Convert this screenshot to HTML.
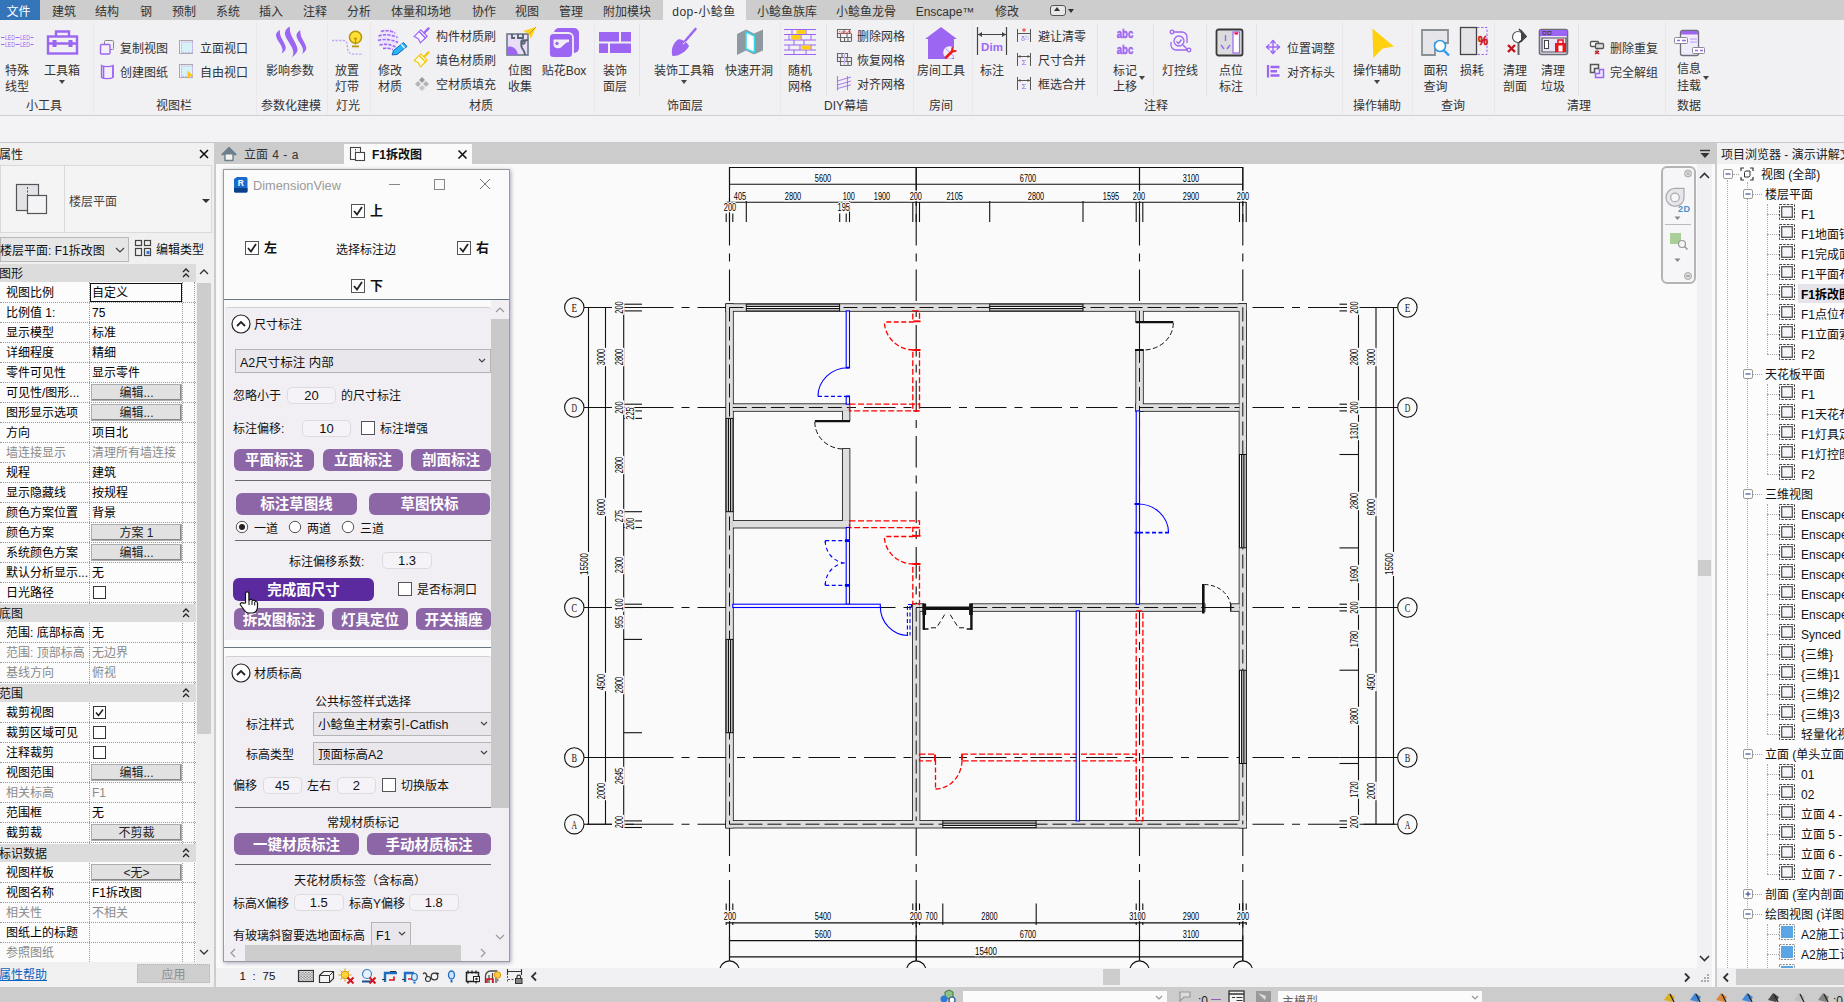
<!DOCTYPE html><html lang="zh-CN"><head><meta charset="utf-8"><title>Revit - DimensionView</title><style>
html,body{margin:0;padding:0}
body{width:1844px;height:1002px;overflow:hidden;background:#cccccc;position:relative;font-family:"Liberation Sans","Noto Sans CJK SC",sans-serif;font-size:12px;color:#333}
.a{position:absolute;display:block}
.t{position:absolute;white-space:nowrap}

</style></head><body>
<!-- ribbon -->
<div class="a" style="left:0px;top:0px;width:1844px;height:20px;background:#cdcdcd"></div>
<div class="a" style="left:0px;top:0px;width:40px;height:20px;background:#3474b9"></div>
<div class="a" style="left:663px;top:0px;width:83px;height:21px;background:#f1f0f3"></div>
<div class="t" style="top:3.7px;line-height:16px;font-size:12px;left:18.5px;transform:translateX(-50%);color:#fff;">文件</div>
<div class="t" style="top:3.7px;line-height:16px;font-size:12px;left:64px;transform:translateX(-50%);color:#333;">建筑</div>
<div class="t" style="top:3.7px;line-height:16px;font-size:12px;left:107px;transform:translateX(-50%);color:#333;">结构</div>
<div class="t" style="top:3.7px;line-height:16px;font-size:12px;left:146px;transform:translateX(-50%);color:#333;">钢</div>
<div class="t" style="top:3.7px;line-height:16px;font-size:12px;left:184px;transform:translateX(-50%);color:#333;">预制</div>
<div class="t" style="top:3.7px;line-height:16px;font-size:12px;left:228px;transform:translateX(-50%);color:#333;">系统</div>
<div class="t" style="top:3.7px;line-height:16px;font-size:12px;left:271px;transform:translateX(-50%);color:#333;">插入</div>
<div class="t" style="top:3.7px;line-height:16px;font-size:12px;left:315px;transform:translateX(-50%);color:#333;">注释</div>
<div class="t" style="top:3.7px;line-height:16px;font-size:12px;left:359px;transform:translateX(-50%);color:#333;">分析</div>
<div class="t" style="top:3.7px;line-height:16px;font-size:12px;left:421px;transform:translateX(-50%);color:#333;">体量和场地</div>
<div class="t" style="top:3.7px;line-height:16px;font-size:12px;left:484px;transform:translateX(-50%);color:#333;">协作</div>
<div class="t" style="top:3.7px;line-height:16px;font-size:12px;left:527px;transform:translateX(-50%);color:#333;">视图</div>
<div class="t" style="top:3.7px;line-height:16px;font-size:12px;left:571px;transform:translateX(-50%);color:#333;">管理</div>
<div class="t" style="top:3.7px;line-height:16px;font-size:12px;left:627px;transform:translateX(-50%);color:#333;">附加模块</div>
<div class="t" style="top:3.7px;line-height:16px;font-size:12px;left:704px;transform:translateX(-50%);color:#333;letter-spacing:.5px;">dop-小鲶鱼</div>
<div class="t" style="top:3.7px;line-height:16px;font-size:12px;left:787px;transform:translateX(-50%);color:#333;">小鲶鱼族库</div>
<div class="t" style="top:3.7px;line-height:16px;font-size:12px;left:866px;transform:translateX(-50%);color:#333;">小鲶鱼龙骨</div>
<div class="t" style="top:3.7px;line-height:16px;font-size:12px;left:945px;transform:translateX(-50%);color:#333;">Enscape™</div>
<div class="t" style="top:3.7px;line-height:16px;font-size:12px;left:1007px;transform:translateX(-50%);color:#333;">修改</div>
<div class="a" style="left:1050px;top:5px;width:14px;height:9px;border:1px solid #555;border-radius:3px;background:#e8e8e8"></div><div class="a" style="left:1054px;top:7px;border:3px solid transparent;border-bottom:4px solid #333;border-top:0"></div><div class="a" style="left:1068px;top:9px;border:3px solid transparent;border-top:4px solid #333;"></div>
<div class="a" style="left:0px;top:20px;width:1844px;height:96px;background:#f1f0f3;border-bottom:1px solid #cfcfcf;box-sizing:border-box"></div>
<div class="a" style="left:0px;top:116px;width:1844px;height:27px;background:#f3f2f4"></div>
<div class="a" style="left:93px;top:22px;width:1px;height:92px;background:#e9e7ec"></div>
<div class="a" style="left:256px;top:22px;width:1px;height:92px;background:#e9e7ec"></div>
<div class="a" style="left:327px;top:22px;width:1px;height:92px;background:#e9e7ec"></div>
<div class="a" style="left:370px;top:22px;width:1px;height:92px;background:#e9e7ec"></div>
<div class="a" style="left:594px;top:22px;width:1px;height:92px;background:#e9e7ec"></div>
<div class="a" style="left:780px;top:22px;width:1px;height:92px;background:#e9e7ec"></div>
<div class="a" style="left:913px;top:22px;width:1px;height:92px;background:#e9e7ec"></div>
<div class="a" style="left:972px;top:22px;width:1px;height:92px;background:#e9e7ec"></div>
<div class="a" style="left:1342px;top:22px;width:1px;height:92px;background:#e9e7ec"></div>
<div class="a" style="left:1412px;top:22px;width:1px;height:92px;background:#e9e7ec"></div>
<div class="a" style="left:1494px;top:22px;width:1px;height:92px;background:#e9e7ec"></div>
<div class="a" style="left:1665px;top:22px;width:1px;height:92px;background:#e9e7ec"></div>
<div class="a" style="left:639px;top:24px;width:1px;height:72px;background:#e4e2e8"></div>
<div class="a" style="left:826px;top:24px;width:1px;height:72px;background:#e4e2e8"></div>
<div class="a" style="left:1097px;top:24px;width:1px;height:72px;background:#e4e2e8"></div>
<div class="a" style="left:1153px;top:24px;width:1px;height:72px;background:#e4e2e8"></div>
<div class="a" style="left:1206px;top:24px;width:1px;height:72px;background:#e4e2e8"></div>
<div class="a" style="left:1256px;top:24px;width:1px;height:72px;background:#e4e2e8"></div>
<div class="a" style="left:1578px;top:24px;width:1px;height:72px;background:#e4e2e8"></div>
<div class="t" style="top:97.8px;line-height:16px;font-size:12px;left:44px;transform:translateX(-50%);">小工具</div>
<div class="t" style="top:97.8px;line-height:16px;font-size:12px;left:174px;transform:translateX(-50%);">视图栏</div>
<div class="t" style="top:97.8px;line-height:16px;font-size:12px;left:291px;transform:translateX(-50%);">参数化建模</div>
<div class="t" style="top:97.8px;line-height:16px;font-size:12px;left:348px;transform:translateX(-50%);">灯光</div>
<div class="t" style="top:97.8px;line-height:16px;font-size:12px;left:481px;transform:translateX(-50%);">材质</div>
<div class="t" style="top:97.8px;line-height:16px;font-size:12px;left:685px;transform:translateX(-50%);">饰面层</div>
<div class="t" style="top:97.8px;line-height:16px;font-size:12px;left:846px;transform:translateX(-50%);">DIY幕墙</div>
<div class="t" style="top:97.8px;line-height:16px;font-size:12px;left:941px;transform:translateX(-50%);">房间</div>
<div class="t" style="top:97.8px;line-height:16px;font-size:12px;left:1156px;transform:translateX(-50%);">注释</div>
<div class="t" style="top:97.8px;line-height:16px;font-size:12px;left:1377px;transform:translateX(-50%);">操作辅助</div>
<div class="t" style="top:97.8px;line-height:16px;font-size:12px;left:1453px;transform:translateX(-50%);">查询</div>
<div class="t" style="top:97.8px;line-height:16px;font-size:12px;left:1579px;transform:translateX(-50%);">清理</div>
<div class="t" style="top:97.8px;line-height:16px;font-size:12px;left:1689px;transform:translateX(-50%);">数据</div>
<svg class="a" style="left:1.0px;top:26px;overflow:visible" width="32" height="32" viewBox="0 0 32 32"><g stroke="#9c66f3" stroke-width="1" fill="none"><path d="M0 11.500h3.500M14.500 11.500h4M29.500 11.500h3M0 18.500h3.500M14.500 18.500h4M29.500 18.500h3"/></g><g font-family="Liberation Sans,sans-serif" font-size="7" fill="#9c66f3"><text x="4" y="14" textLength="10" lengthAdjust="spacingAndGlyphs">LED</text><text x="19" y="14" textLength="10" lengthAdjust="spacingAndGlyphs">LED</text><text x="4" y="21" textLength="10" lengthAdjust="spacingAndGlyphs">LED</text><text x="19" y="21" textLength="10" lengthAdjust="spacingAndGlyphs">LED</text></g></svg><div class="t" style="top:62.8px;line-height:16px;font-size:12px;left:17px;transform:translateX(-50%);">特殊</div><div class="t" style="top:79.4px;line-height:16px;font-size:12px;left:17px;transform:translateX(-50%);">线型</div>
<svg class="a" style="left:46.0px;top:26px;overflow:visible" width="32" height="32" viewBox="0 0 32 32"><g fill="none" stroke="#9c66f3" stroke-width="2.4"><rect x="2" y="10.5" width="29" height="17"/><path d="M10 10V5.5h13V10M2 17.5h29"/></g><rect x="6.5" y="14" width="4" height="7" fill="#9c66f3"/><rect x="22.5" y="14" width="4" height="7" fill="#9c66f3"/></svg><div class="t" style="top:62.8px;line-height:16px;font-size:12px;left:62px;transform:translateX(-50%);">工具箱</div><div class="a" style="left:59px;top:80px;border:3px solid transparent;border-top:4px solid #444;"></div>
<svg class="a" style="left:99px;top:39px;overflow:visible" width="16" height="16" viewBox="0 0 16 16"><rect x="5.500" y="1.500" width="9" height="9" rx="1" fill="none" stroke="#888" stroke-width="1"/><rect x="1.500" y="5.500" width="9.500" height="9.500" rx="1" fill="#f4f0fb" stroke="#9c66f3" stroke-width="1.400"/></svg><div class="t" style="top:40.6px;line-height:16px;font-size:12px;left:120px;">复制视图</div>
<svg class="a" style="left:99px;top:63px;overflow:visible" width="16" height="16" viewBox="0 0 16 16"><path d="M2.500 2.500c2 1.500 9 1.500 11.500 0v12c-2.500 1.500-9.500 1.500-11.500 0z" fill="#f4f0fb" stroke="#9c66f3" stroke-width="1.300"/><path d="M4.500 3v12M14 2.500v12" stroke="#9c66f3" stroke-width="1.600"/></svg><div class="t" style="top:64.6px;line-height:16px;font-size:12px;left:120px;">创建图纸</div>
<svg class="a" style="left:178px;top:39px;overflow:visible" width="16" height="16" viewBox="0 0 16 16"><rect x="1.500" y="1.500" width="13" height="13" fill="none" stroke="#aaa" stroke-width="1"/><rect x="3.500" y="3" width="11" height="10.500" fill="#d6f1f7" stroke="#c9b3f7" stroke-width="1" stroke-dasharray="2 1"/></svg><div class="t" style="top:40.6px;line-height:16px;font-size:12px;left:200px;">立面视口</div>
<svg class="a" style="left:178px;top:63px;overflow:visible" width="16" height="16" viewBox="0 0 16 16"><rect x="1.500" y="1.500" width="13" height="13" fill="none" stroke="#aaa" stroke-width="1"/><rect x="3.500" y="3" width="11" height="10.500" fill="#d6f1f7" stroke="#c9b3f7" stroke-width="1" stroke-dasharray="2 1"/><path d="M9.500 7.500l6 5.500l-3.500 .3l-2.500 3z" fill="#ffc61a"/></svg><div class="t" style="top:64.6px;line-height:16px;font-size:12px;left:200px;">自由视口</div>
<svg class="a" style="left:274.0px;top:26px;overflow:visible" width="32" height="32" viewBox="0 0 32 32"><g fill="#9c66f3"><path d="M5.8 4.0C3.3 5.5 1.3 7.5 2.3 11.0C3.8 15.5 8.3 19.5 8.5 24.0C8.6 25.5 8.1 27.0 7.2 28.0C9.8 26.0 12.1 24.0 11.8 21.5C11.1 17.0 6.6 12.0 6.1 8.0C5.9 6.5 5.8 5.0 5.8 4.0z"/><path d="M15.8 0.4C12.6 2.3 10.0 4.9 11.3 9.4C13.2 15.2 19.0 20.4 19.3 26.2C19.4 28.1 18.8 30.1 17.6 31.4C21.0 28.8 23.9 26.2 23.5 23.0C22.6 17.2 16.8 10.7 16.2 5.6C15.9 3.6 15.8 1.7 15.8 0.4z"/><path d="M26.3 4.2C23.8 5.7 21.8 7.7 22.8 11.2C24.3 15.7 28.8 19.7 29.0 24.2C29.1 25.7 28.6 27.2 27.7 28.2C30.3 26.2 32.6 24.2 32.3 21.7C31.6 17.2 27.1 12.2 26.6 8.2C26.4 6.7 26.3 5.2 26.3 4.2z"/></g></svg><div class="t" style="top:62.8px;line-height:16px;font-size:12px;left:290px;transform:translateX(-50%);">影响参数</div>
<svg class="a" style="left:331.0px;top:26px;overflow:visible" width="32" height="32" viewBox="0 0 32 32"><path d="M1 14.500H12C16 14.500 16.500 18 16.500 22C16.500 27 20 28.200 25 28.200H32" fill="none" stroke="#bda6f3" stroke-width="1.300" stroke-dasharray="2.200 1.400"/><circle cx="24.500" cy="11.300" r="6" fill="#ffe033" stroke="#b8960c" stroke-width="1.500"/><path d="M22.800 12.500h3.400M24.500 12.500v6" fill="none" stroke="#b8960c" stroke-width="1.300"/><path d="M21 20.400h7" stroke="#b8960c" stroke-width="1.800"/></svg><div class="t" style="top:62.8px;line-height:16px;font-size:12px;left:347px;transform:translateX(-50%);">放置</div><div class="t" style="top:79.4px;line-height:16px;font-size:12px;left:347px;transform:translateX(-50%);">灯带</div>
<svg class="a" style="left:374.0px;top:26px;overflow:visible" width="32" height="32" viewBox="0 0 32 32"><circle cx="14.200" cy="12.900" r="10.400" fill="#ece4fc"/><g stroke="#9c66f3" stroke-width="1.500" stroke-dasharray="3.200 1.300" fill="none"><path d="M7 5.500c5-1.500 10-1 14 1.500M4.500 10c6-2 13-1.500 19 1.500M4 14.500c7-2 14-1 20 2M5.500 19c6-1.500 11-.500 16 2M9 22.500c4-.500 7 0 10 1"/></g><path d="M18.100 28.900L19.500 24.500L29.500 16.500L33 20.500L23 28.500z" fill="#29b6f6" stroke="#1565c0" stroke-width="1"/><path d="M27.300 18.300l3.500 4" stroke="#fff" stroke-width="1.200"/></svg><div class="t" style="top:62.8px;line-height:16px;font-size:12px;left:390px;transform:translateX(-50%);">修改</div><div class="t" style="top:79.4px;line-height:16px;font-size:12px;left:390px;transform:translateX(-50%);">材质</div>
<svg class="a" style="left:414px;top:27px;overflow:visible" width="16" height="16" viewBox="0 0 16 16"><g transform="translate(7.500,8.500) rotate(45)" fill="#f7f2ff" stroke="#9c66f3" stroke-width="1.200" stroke-linejoin="round"><path d="M0 -10v6.500" stroke-width="2.400" stroke-linecap="round"/><rect x="-4.500" y="-3.500" width="9" height="2.500"/><path d="M-4.500 -1v7l4.500-1.500l4.500 1.500v-7z"/></g></svg><div class="t" style="top:28.6px;line-height:16px;font-size:12px;left:436px;">构件材质刷</div>
<svg class="a" style="left:414px;top:51px;overflow:visible" width="16" height="16" viewBox="0 0 16 16"><g transform="translate(7.500,8.500) rotate(45)" fill="#fffbe0" stroke="#f5c710" stroke-width="1.200" stroke-linejoin="round"><path d="M0 -10v6.500" stroke-width="2.400" stroke-linecap="round"/><rect x="-4.500" y="-3.500" width="9" height="2.500"/><path d="M-4.500 -1v7l4.500-1.500l4.500 1.500v-7z"/></g></svg><div class="t" style="top:52.6px;line-height:16px;font-size:12px;left:436px;">填色材质刷</div>
<svg class="a" style="left:414px;top:75px;overflow:visible" width="16" height="16" viewBox="0 0 16 16"><g fill="#9a9a9a"><path d="M8 2l3 3l-3 3l-3-3z"/><path d="M4 6l3 3l-3 3l-3-3z" opacity=".7"/><path d="M12 6l3 3l-3 3l-3-3z" opacity=".7"/><path d="M8 10l3 3l-3 3l-3-3z" opacity=".5"/></g></svg><div class="t" style="top:76.6px;line-height:16px;font-size:12px;left:436px;">空材质填充</div>
<svg class="a" style="left:504.0px;top:26px;overflow:visible" width="32" height="32" viewBox="0 0 32 32"><rect x="3" y="8" width="21" height="21" fill="#e8defa" stroke="#6c7a86" stroke-width="1.6"/><path d="M3 21c6-2 10 2 11 8H3z" fill="#9c66f3"/><path d="M8 8v4h3M14 8v4h5v-4M24 14c-6 0-8 4-6 8c2 3 3 4 3 7" fill="none" stroke="#56636e" stroke-width="1.8"/><circle cx="19" cy="16" r="2" fill="none" stroke="#56636e" stroke-width="1.4"/><path d="M19 5l13-4l-5 12l-2-5z" fill="#ffd21f"/><path d="M32 1l-7 7" stroke="#c79a00" stroke-width="1"/></svg><div class="t" style="top:62.8px;line-height:16px;font-size:12px;left:520px;transform:translateX(-50%);">位图</div><div class="t" style="top:79.4px;line-height:16px;font-size:12px;left:520px;transform:translateX(-50%);">收集</div>
<svg class="a" style="left:548.0px;top:26px;overflow:visible" width="32" height="32" viewBox="0 0 32 32"><rect x="6" y="2" width="25" height="25" rx="5" fill="#9c66f3"/><rect x="1" y="7" width="24" height="25" rx="4.500" fill="#9c66f3" stroke="#f1eff4" stroke-width="1.800"/><path d="M5.500 13.500h15.500v2.500c-3 0-5 3-8 5.500c-2 1.500-7.500 1-7.500-3z" fill="#f1eff4"/><circle cx="9" cy="17.500" r="1.700" fill="#9c66f3"/></svg><div class="t" style="top:62.8px;line-height:16px;font-size:12px;left:564px;transform:translateX(-50%);">贴花Box</div>
<svg class="a" style="left:599.0px;top:26px;overflow:visible" width="32" height="32" viewBox="0 0 32 32"><g fill="#9c66f3"><rect x="0" y="6" width="20" height="9.5"/><rect x="22" y="6" width="10" height="9.5"/><rect x="0" y="17.500" width="9" height="9.5"/><rect x="11" y="17.5" width="21" height="9.5"/></g></svg><div class="t" style="top:62.8px;line-height:16px;font-size:12px;left:615px;transform:translateX(-50%);">装饰</div><div class="t" style="top:79.4px;line-height:16px;font-size:12px;left:615px;transform:translateX(-50%);">面层</div>
<svg class="a" style="left:668.0px;top:26px;overflow:visible" width="32" height="32" viewBox="0 0 32 32"><path d="M27.500 3L15 17.500" stroke="#9c66f3" stroke-width="2.600" stroke-linecap="round"/><path d="M10 13.500C13 12.500 19 16 21 20C19 25 11 30.500 4.500 30C2.500 24 5 17 10 13.500z" fill="#9c66f3"/><path d="M17.500 15.500L15 18.500" stroke="#f1eff4" stroke-width="1"/></svg><div class="t" style="top:62.8px;line-height:16px;font-size:12px;left:684px;transform:translateX(-50%);">装饰工具箱</div><div class="a" style="left:681px;top:80px;border:3px solid transparent;border-top:4px solid #444;"></div>
<svg class="a" style="left:733.0px;top:26px;overflow:visible" width="32" height="32" viewBox="0 0 32 32"><path d="M4 8l9-4.500l8 4l9-4v21l-9 4l-8-4l-9 4.500z" fill="#8e9aa0"/><path d="M13 6l8.500 4v16.500l-8.500-3.500z" fill="#fff" stroke="#35d7ee" stroke-width="1.500"/></svg><div class="t" style="top:62.8px;line-height:16px;font-size:12px;left:749px;transform:translateX(-50%);">快速开洞</div>
<svg class="a" style="left:784.0px;top:26px;overflow:visible" width="32" height="32" viewBox="0 0 32 32"><g stroke="#9c66f3" stroke-width="1.100"><path d="M0 3.500h32M0 8.500h32M0 14h32M0 19h32M0 24h32M0 28.500h32"/><path d="M8 3.500v5M22 3.500v5M5 8.500v5.500M17 8.500v5.500M27 8.500v5.500M10 14v5M20 14v5M5 19v5M16 19v5M27 19v5M10 24v4.500M22 24v4.500" stroke-width="1"/></g><rect x="12.500" y="4" width="9" height="4" fill="#ffcf14"/><rect x="7" y="9" width="9.500" height="4.500" fill="#ffcf14"/><rect x="17.500" y="19.500" width="9" height="4" fill="#ffcf14"/></svg><div class="t" style="top:62.8px;line-height:16px;font-size:12px;left:800px;transform:translateX(-50%);">随机</div><div class="t" style="top:79.4px;line-height:16px;font-size:12px;left:800px;transform:translateX(-50%);">网格</div>
<svg class="a" style="left:836px;top:27px;overflow:visible" width="16" height="16" viewBox="0 0 16 16"><g fill="none" stroke="#666" stroke-width="1.100"><path d="M1 2.500h14M1 6.500h14M1 10.500h15M4 14.500h11M1.500 2.500v8M8 2.500v4M13.500 2.500v4M4.500 6.500v4M11 6.500v4M15.500 6.500v8M4.500 10.500v4M8.500 10.500v4M12 10.500v4"/></g><path d="M3.500 4l1.500 3l1.500-3l1.500 3l1.500-3l1.500 3l1.500-3l1.500 3l1-3" fill="none" stroke="#f0525c" stroke-width="1" stroke-dasharray="1.200 .8"/></svg><div class="t" style="top:28.6px;line-height:16px;font-size:12px;left:857px;">删除网格</div>
<svg class="a" style="left:836px;top:51px;overflow:visible" width="16" height="16" viewBox="0 0 16 16"><g fill="none" stroke="#666" stroke-width="1.100"><path d="M1 2.500h11M1 6.500h15M1 10.500h15M4 14.500h11M1.500 2.500v8M6 2.500v4M11.500 2.500v4M4.500 6.500v4M11 6.500v4M15.500 6.500v8M4.500 10.500v4M8.500 10.500v4M12 10.500v4"/></g><path d="M8.500 2v12" stroke="#c9b3f7" stroke-width="1.300"/></svg><div class="t" style="top:52.6px;line-height:16px;font-size:12px;left:857px;">恢复网格</div>
<svg class="a" style="left:836px;top:75px;overflow:visible" width="16" height="16" viewBox="0 0 16 16"><path d="M1.500 1v14.500M11.500 1v14.500" stroke="#999" stroke-width="1.100"/><path d="M1.500 6l13.500-4M1.500 10l13.500-4M1.500 13.500l13.500-3.800" stroke="#9c66f3" stroke-width="1.100" opacity=".8"/></svg><div class="t" style="top:76.6px;line-height:16px;font-size:12px;left:857px;">对齐网格</div>
<svg class="a" style="left:925.0px;top:26px;overflow:visible" width="32" height="32" viewBox="0 0 32 32"><path d="M16 1L0 13h3v20h26V13H32z" fill="#9c66f3"/><circle cx="24.500" cy="26.500" r="6.300" fill="#f4f0fb"/><path d="M20.500 22.500l8.500 8" stroke="#c9b3f7" stroke-width="1.300"/><path d="M21 31.500l6-6" stroke="#e8211b" stroke-width="2.800" stroke-linecap="round"/><path d="M27 25.500l.5-3.500M27 25.500l3.500-.5" stroke="#e8211b" stroke-width="2.200" stroke-linecap="round"/></svg><div class="t" style="top:62.8px;line-height:16px;font-size:12px;left:941px;transform:translateX(-50%);">房间工具</div>
<svg class="a" style="left:976.0px;top:26px;overflow:visible" width="32" height="32" viewBox="0 0 32 32"><path d="M1.500 1v28M30.500 1v28M2 8.500h28" stroke="#444" stroke-width="1.200" fill="none"/><path d="M2 8.500l4-2.500v5zM30 8.500l-4-2.500v5z" fill="#444"/><text x="16" y="25" text-anchor="middle" font-family="Liberation Sans,sans-serif" font-weight="bold" font-size="11.500" fill="#9c66f3" textLength="22">Dim</text></svg><div class="t" style="top:62.8px;line-height:16px;font-size:12px;left:992px;transform:translateX(-50%);">标注</div>
<svg class="a" style="left:1016px;top:27px;overflow:visible" width="16" height="16" viewBox="0 0 16 16"><path d="M1.500 2v13M14.500 2v13M2 6.500h12" stroke="#555" stroke-width="1" fill="none"/><circle cx="8" cy="3" r="1.700" fill="#f55"/><text x="5" y="14" font-size="7" font-family="Liberation Sans,sans-serif" fill="#9c66f3">δ</text><text x="9" y="13" font-size="7" font-family="Liberation Sans,sans-serif" fill="#c9b3f7">b</text></svg><div class="t" style="top:28.6px;line-height:16px;font-size:12px;left:1038px;">避让清零</div>
<svg class="a" style="left:1016px;top:51px;overflow:visible" width="16" height="16" viewBox="0 0 16 16"><path d="M1.500 2v13M14.500 2v13M2 5.500h12" stroke="#555" stroke-width="1" fill="none"/><path d="M2 5.500l2.500-1.500v3zM14 5.500l-2.500-1.500v3z" fill="#555"/><text x="5.500" y="14" font-size="8" font-family="Liberation Sans,sans-serif" fill="#9c66f3">Σ</text></svg><div class="t" style="top:52.6px;line-height:16px;font-size:12px;left:1038px;">尺寸合并</div>
<svg class="a" style="left:1016px;top:75px;overflow:visible" width="16" height="16" viewBox="0 0 16 16"><path d="M1.500 2v13M14.500 2v13M2 5.500h12" stroke="#555" stroke-width="1" fill="none"/><path d="M2 5.500l2.500-1.500v3zM14 5.500l-2.500-1.500v3z" fill="#555"/><text x="5.500" y="14" font-size="8" font-family="Liberation Sans,sans-serif" fill="#9c66f3">Σ</text></svg><div class="t" style="top:76.6px;line-height:16px;font-size:12px;left:1038px;">框选合并</div>
<svg class="a" style="left:1109.0px;top:26px;overflow:visible" width="32" height="32" viewBox="0 0 32 32"><g font-family="Liberation Sans,sans-serif" font-weight="bold" font-size="13.500" fill="#9c66f3" stroke="#9c66f3" stroke-width=".500" text-anchor="middle"><text x="16" y="12" textLength="16.500" lengthAdjust="spacingAndGlyphs">abc</text><text x="16" y="28" textLength="16.500" lengthAdjust="spacingAndGlyphs">abc</text></g></svg><div class="t" style="top:62.8px;line-height:16px;font-size:12px;left:1125px;transform:translateX(-50%);">标记</div><div class="t" style="top:79.4px;line-height:16px;font-size:12px;left:1125px;transform:translateX(-50%);">上移</div><div class="a" style="left:1139px;top:76px;border:3px solid transparent;border-top:4px solid #444;"></div>
<svg class="a" style="left:1164.0px;top:26px;overflow:visible" width="32" height="32" viewBox="0 0 32 32"><g fill="none" stroke="#9c66f3" stroke-width="1.300"><circle cx="8" cy="6" r="1.800"/><path d="M10 6h8a5 5 0 0 1 5 5v6M24 24h-12a5 5 0 0 1-5-5v-3"/><circle cx="25" cy="24" r="1.800"/><circle cx="15" cy="15" r="5"/><path d="M12.500 15.500l2 2l3-4M19 19l4 4"/></g></svg><div class="t" style="top:62.8px;line-height:16px;font-size:12px;left:1180px;transform:translateX(-50%);">灯控线</div>
<svg class="a" style="left:1215.0px;top:26px;overflow:visible" width="32" height="32" viewBox="0 0 32 32"><rect x="1.500" y="3.500" width="26" height="26" rx="2" fill="#dcdcde" stroke="#3a3a3a" stroke-width="1.800"/><rect x="18" y="6" width="6.500" height="21" fill="#fff" stroke="#9c66f3" stroke-width="1.200"/><rect x="19.500" y="6.500" width="3.500" height="2" fill="#f03"/><path d="M10.500 9v6M6 19l3 4M15 19l-3 4" stroke="#9c66f3" stroke-width="1.400"/></svg><div class="t" style="top:62.8px;line-height:16px;font-size:12px;left:1231px;transform:translateX(-50%);">点位</div><div class="t" style="top:79.4px;line-height:16px;font-size:12px;left:1231px;transform:translateX(-50%);">标注</div>
<svg class="a" style="left:1265px;top:39px;overflow:visible" width="16" height="16" viewBox="0 0 16 16"><g fill="none" stroke="#9c66f3" stroke-width="1.400" stroke-linejoin="round" stroke-linecap="round"><path d="M8 2v12M2 8h12"/><path d="M5.800 4L8 1.500L10.200 4M5.800 12L8 14.500L10.200 12M4 5.800L1.500 8L4 10.200M12 5.800L14.500 8L12 10.200"/></g></svg><div class="t" style="top:40.6px;line-height:16px;font-size:12px;left:1287px;">位置调整</div>
<svg class="a" style="left:1265px;top:63px;overflow:visible" width="16" height="16" viewBox="0 0 16 16"><path d="M3 2v12.500" stroke="#9c66f3" stroke-width="2.200"/><path d="M5.500 4h9M5.500 8.200h6.500M5.500 12.500h9" stroke="#9c66f3" stroke-width="2.600"/></svg><div class="t" style="top:64.6px;line-height:16px;font-size:12px;left:1287px;">对齐标头</div>
<svg class="a" style="left:1361.0px;top:26px;overflow:visible" width="32" height="32" viewBox="0 0 32 32"><path d="M11.400 2.400L33 20.600L21.500 22.600L12.300 31.900z" fill="#ffd10f"/></svg><div class="t" style="top:62.8px;line-height:16px;font-size:12px;left:1377px;transform:translateX(-50%);">操作辅助</div><div class="a" style="left:1374px;top:80px;border:3px solid transparent;border-top:4px solid #444;"></div>
<svg class="a" style="left:1419.5px;top:27px;overflow:visible" width="32" height="32" viewBox="0 0 32 32"><path d="M2 3h26v13H15v12H2z" fill="#e6e6ea" stroke="#8a8f93" stroke-width="1.800"/><circle cx="20" cy="19" r="5.500" fill="#fff" stroke="#2d9be8" stroke-width="1.600"/><path d="M24 23.500l5 5" stroke="#2d9be8" stroke-width="2.400"/></svg><div class="t" style="top:62.8px;line-height:16px;font-size:12px;left:1435.5px;transform:translateX(-50%);">面积</div><div class="t" style="top:79.4px;line-height:16px;font-size:12px;left:1435.5px;transform:translateX(-50%);">查询</div>
<svg class="a" style="left:1456.0px;top:26px;overflow:visible" width="32" height="32" viewBox="0 0 32 32"><rect x="4.500" y="1.500" width="16" height="27" fill="#e4e4e8" stroke="#444" stroke-width="1.300"/><path d="M21 1.500h10v27H21" fill="none" stroke="#9c66f3" stroke-width="1" stroke-dasharray="2.500 1.500"/><text x="22" y="19" font-family="Liberation Sans,sans-serif" font-weight="bold" font-size="12" fill="#d0121b" stroke="#d0121b" stroke-width=".500" textLength="10" lengthAdjust="spacingAndGlyphs">%</text></svg><div class="t" style="top:62.8px;line-height:16px;font-size:12px;left:1472px;transform:translateX(-50%);">损耗</div>
<svg class="a" style="left:1499.0px;top:26px;overflow:visible" width="32" height="32" viewBox="0 0 32 32"><path d="M19.500 13V29" stroke="#666" stroke-width="2"/><circle cx="19" cy="11" r="5.500" fill="#fff" stroke="#555" stroke-width="1.200"/><path d="M20 3l7 7.500l-7 6" fill="none" stroke="#333" stroke-width="1.400"/><path d="M22 3.500l6 7l-6 6z" fill="#444"/><path d="M9 19l7 7M16 19l-7 7" stroke="#c4161c" stroke-width="2.400"/></svg><div class="t" style="top:62.8px;line-height:16px;font-size:12px;left:1515px;transform:translateX(-50%);">清理</div><div class="t" style="top:79.4px;line-height:16px;font-size:12px;left:1515px;transform:translateX(-50%);">剖面</div>
<svg class="a" style="left:1537.0px;top:26px;overflow:visible" width="32" height="32" viewBox="0 0 32 32"><rect x="2.500" y="3.500" width="28" height="25" rx="2" fill="#e9e3f7" stroke="#6d6d78" stroke-width="1.600"/><path d="M3 4h27v6H3z" fill="#9c66f3"/><rect x="6" y="5.500" width="3" height="3" fill="none" stroke="#444" stroke-width=".8"/><rect x="11" y="5.500" width="3" height="3" fill="none" stroke="#444" stroke-width=".8"/><path d="M5 12h24v14H5z" fill="none" stroke="#555" stroke-width="1.200"/><rect x="7.500" y="14.500" width="4" height="8" fill="#fff" stroke="#444"/><path d="M18 17h11v9H18z" fill="#e8161e"/><path d="M21 17v-3h5v3" fill="none" stroke="#e8161e" stroke-width="1.600"/><rect x="21.500" y="19.500" width="4" height="6" fill="#fff"/></svg><div class="t" style="top:62.8px;line-height:16px;font-size:12px;left:1553px;transform:translateX(-50%);">清理</div><div class="t" style="top:79.4px;line-height:16px;font-size:12px;left:1553px;transform:translateX(-50%);">垃圾</div>
<svg class="a" style="left:1589px;top:39px;overflow:visible" width="16" height="16" viewBox="0 0 16 16"><rect x="1.500" y="2.500" width="8" height="5" rx="1" fill="#fff" stroke="#555" stroke-width="1.300"/><rect x="6.500" y="4.500" width="8" height="5" rx="1" fill="#ddd" stroke="#555" stroke-width="1.300"/><path d="M8 10v3" stroke="#666"/><path d="M6 12l4 3M10 12l-4 3" stroke="#c4161c" stroke-width="1.500"/></svg><div class="t" style="top:40.6px;line-height:16px;font-size:12px;left:1610px;">删除重复</div>
<svg class="a" style="left:1589px;top:63px;overflow:visible" width="16" height="16" viewBox="0 0 16 16"><path d="M1.500 1.500h8v4h-4v4h-4z" fill="none" stroke="#555" stroke-width="1.500"/><path d="M14.500 6.500v8h-8v-4h4v-4z" fill="#efe7fd" stroke="#9c66f3" stroke-width="1.500"/></svg><div class="t" style="top:64.6px;line-height:16px;font-size:12px;left:1610px;">完全解组</div>
<svg class="a" style="left:1673.0px;top:27.5px;overflow:visible" width="32" height="32" viewBox="0 0 32 32"><rect x="7.500" y="2.500" width="18" height="25" rx="2" fill="#f1ecfb" stroke="#6d6d78" stroke-width="1.300"/><path d="M8 3h17v3.500H8z" fill="#9c66f3"/><path d="M17 11h7M17 14h7" stroke="#c9b3f7" stroke-width="1.300"/><rect x="1.500" y="9.500" width="13" height="6" rx="1" fill="#fff" stroke="#8a8a96"/><rect x="19.500" y="19.500" width="12" height="6" rx="1" fill="#fff" stroke="#8a8a96"/><path d="M4 12.500h3M9 12.500h4M22 22.500h3M27 22.500h3" stroke="#9c66f3" stroke-width="1.600"/></svg><div class="t" style="top:61.1px;line-height:16px;font-size:12px;left:1689px;transform:translateX(-50%);">信息</div><div class="t" style="top:77.7px;line-height:16px;font-size:12px;left:1689px;transform:translateX(-50%);">挂载</div><div class="a" style="left:1703px;top:76px;border:3px solid transparent;border-top:4px solid #444;"></div>
<!-- properties -->
<div class="a" style="left:0px;top:143px;width:214px;height:844px;background:#f0f0f0"></div>
<div class="a" style="left:0px;top:142px;width:1844px;height:1px;background:#c9c9c9"></div>
<div class="t" style="top:146.5px;line-height:16px;font-size:12px;left:-1px;color:#222;">属性</div>
<svg class="a" style="left:198px;top:148px" width="12" height="12"><path d="M2 2l8 8M10 2l-8 8" stroke="#111" stroke-width="1.600"/></svg>
<div class="a" style="left:0px;top:165px;width:212px;height:68px;background:#f4f4f4;border:1px solid #dadada;box-sizing:border-box"></div>
<div class="a" style="left:0px;top:165px;width:65px;height:68px;background:#f4f4f4;border:1px solid #dadada;box-sizing:border-box"></div>
<svg class="a" style="left:15px;top:183px" width="34" height="34"><rect x="1.500" y="1.500" width="22" height="26" fill="#e4e4e8" stroke="#555" stroke-width="1.200"/><rect x="12.500" y="12.500" width="19" height="18" fill="#f4f4f6" stroke="#555" stroke-width="1.200"/><path d="M12.500 4v8.500h19" fill="none" stroke="#555" stroke-dasharray="2 1.500"/></svg>
<div class="t" style="top:193.5px;line-height:16px;font-size:12px;left:69px;color:#444;">楼层平面</div>
<div class="a" style="left:202px;top:199px;border:4px solid transparent;border-top:4px solid #333;"></div>
<div class="a" style="left:0px;top:237px;width:129px;height:25px;background:#e6e6e6;border:1px solid #b8b8b8;box-sizing:border-box"></div>
<div class="t" style="top:242.5px;line-height:16px;font-size:12px;left:0px;color:#111;">楼层平面: F1拆改图</div>
<svg class="a" style="left:114px;top:245px" width="12" height="10"><path d="M2 3l4 4l4-4" fill="none" stroke="#444" stroke-width="1.200"/></svg>
<svg class="a" style="left:134px;top:239px" width="18" height="18"><g fill="none" stroke="#444" stroke-width="1.200"><rect x="1.500" y="1.500" width="6" height="5"/><rect x="10.500" y="1.500" width="6" height="5"/><rect x="1.500" y="9.500" width="6" height="7"/><rect x="10.500" y="9.500" width="6" height="7"/></g><rect x="12.500" y="12" width="3" height="3" fill="#2d7bd8"/></svg>
<div class="t" style="top:241.5px;line-height:16px;font-size:12px;left:156px;color:#111;">编辑类型</div>
<div class="a" style="left:0px;top:264px;width:196px;height:698px;background:#fcfcfc"></div>
<div class="a" style="left:89px;top:282px;width:0px;height:680px;border-left:1px dotted #999"></div>
<div class="a" style="left:182px;top:282px;width:0px;height:680px;border-left:1px dotted #999"></div>
<div class="a" style="left:194px;top:282px;width:0px;height:680px;border-left:1px dotted #999"></div>
<div class="a" style="left:0px;top:264px;width:196px;height:18px;background:#dcdcdc"></div>
<div class="t" style="top:265.8px;line-height:16px;font-size:12px;left:-1px;color:#111;">图形</div>
<svg class="a" style="left:181px;top:267px" width="10" height="12"><path d="M2 5l3-3l3 3M2 10l3-3l3 3" fill="none" stroke="#222" stroke-width="1.300"/></svg>
<div class="a" style="left:0px;top:302px;width:196px;height:0px;border-top:1px dotted #999"></div>
<div class="t" style="top:284.7px;line-height:16px;font-size:12px;left:6px;color:#000;">视图比例</div>
<div class="t" style="top:284.7px;line-height:16px;font-size:12px;left:92px;color:#000;">自定义</div>
<div class="a" style="left:90px;top:283px;width:92px;height:19px;border:1px solid #111;box-sizing:border-box"></div>
<div class="a" style="left:0px;top:322px;width:196px;height:0px;border-top:1px dotted #999"></div>
<div class="t" style="top:304.7px;line-height:16px;font-size:12px;left:6px;color:#000;">比例值 1:</div>
<div class="t" style="top:304.7px;line-height:16px;font-size:12px;left:92px;color:#000;">75</div>
<div class="a" style="left:0px;top:342px;width:196px;height:0px;border-top:1px dotted #999"></div>
<div class="t" style="top:324.7px;line-height:16px;font-size:12px;left:6px;color:#000;">显示模型</div>
<div class="t" style="top:324.7px;line-height:16px;font-size:12px;left:92px;color:#000;">标准</div>
<div class="a" style="left:0px;top:362px;width:196px;height:0px;border-top:1px dotted #999"></div>
<div class="t" style="top:344.7px;line-height:16px;font-size:12px;left:6px;color:#000;">详细程度</div>
<div class="t" style="top:344.7px;line-height:16px;font-size:12px;left:92px;color:#000;">精细</div>
<div class="a" style="left:0px;top:382px;width:196px;height:0px;border-top:1px dotted #999"></div>
<div class="t" style="top:364.7px;line-height:16px;font-size:12px;left:6px;color:#000;">零件可见性</div>
<div class="t" style="top:364.7px;line-height:16px;font-size:12px;left:92px;color:#000;">显示零件</div>
<div class="a" style="left:0px;top:402px;width:196px;height:0px;border-top:1px dotted #999"></div>
<div class="t" style="top:384.7px;line-height:16px;font-size:12px;left:6px;color:#000;">可见性/图形...</div>
<div class="a" style="left:91px;top:384px;width:91px;height:17px;background:#e1e1e1;border:1px solid #adadad;box-sizing:border-box;box-shadow:inset -1px -1px 0 #888"></div><div class="t" style="top:385.2px;line-height:16px;font-size:12px;left:136.5px;transform:translateX(-50%);color:#222;">编辑...</div>
<div class="a" style="left:0px;top:422px;width:196px;height:0px;border-top:1px dotted #999"></div>
<div class="t" style="top:404.7px;line-height:16px;font-size:12px;left:6px;color:#000;">图形显示选项</div>
<div class="a" style="left:91px;top:404px;width:91px;height:17px;background:#e1e1e1;border:1px solid #adadad;box-sizing:border-box;box-shadow:inset -1px -1px 0 #888"></div><div class="t" style="top:405.2px;line-height:16px;font-size:12px;left:136.5px;transform:translateX(-50%);color:#222;">编辑...</div>
<div class="a" style="left:0px;top:442px;width:196px;height:0px;border-top:1px dotted #999"></div>
<div class="t" style="top:424.7px;line-height:16px;font-size:12px;left:6px;color:#000;">方向</div>
<div class="t" style="top:424.7px;line-height:16px;font-size:12px;left:92px;color:#000;">项目北</div>
<div class="a" style="left:0px;top:462px;width:196px;height:0px;border-top:1px dotted #999"></div>
<div class="t" style="top:444.7px;line-height:16px;font-size:12px;left:6px;color:#8a8a8a;">墙连接显示</div>
<div class="t" style="top:444.7px;line-height:16px;font-size:12px;left:92px;color:#8a8a8a;">清理所有墙连接</div>
<div class="a" style="left:0px;top:482px;width:196px;height:0px;border-top:1px dotted #999"></div>
<div class="t" style="top:464.7px;line-height:16px;font-size:12px;left:6px;color:#000;">规程</div>
<div class="t" style="top:464.7px;line-height:16px;font-size:12px;left:92px;color:#000;">建筑</div>
<div class="a" style="left:0px;top:502px;width:196px;height:0px;border-top:1px dotted #999"></div>
<div class="t" style="top:484.7px;line-height:16px;font-size:12px;left:6px;color:#000;">显示隐藏线</div>
<div class="t" style="top:484.7px;line-height:16px;font-size:12px;left:92px;color:#000;">按规程</div>
<div class="a" style="left:0px;top:522px;width:196px;height:0px;border-top:1px dotted #999"></div>
<div class="t" style="top:504.7px;line-height:16px;font-size:12px;left:6px;color:#000;">颜色方案位置</div>
<div class="t" style="top:504.7px;line-height:16px;font-size:12px;left:92px;color:#000;">背景</div>
<div class="a" style="left:0px;top:542px;width:196px;height:0px;border-top:1px dotted #999"></div>
<div class="t" style="top:524.7px;line-height:16px;font-size:12px;left:6px;color:#000;">颜色方案</div>
<div class="a" style="left:91px;top:524px;width:91px;height:17px;background:#e1e1e1;border:1px solid #adadad;box-sizing:border-box;box-shadow:inset -1px -1px 0 #888"></div><div class="t" style="top:525.2px;line-height:16px;font-size:12px;left:136.5px;transform:translateX(-50%);color:#222;">方案 1</div>
<div class="a" style="left:0px;top:562px;width:196px;height:0px;border-top:1px dotted #999"></div>
<div class="t" style="top:544.7px;line-height:16px;font-size:12px;left:6px;color:#000;">系统颜色方案</div>
<div class="a" style="left:91px;top:544px;width:91px;height:17px;background:#e1e1e1;border:1px solid #adadad;box-sizing:border-box;box-shadow:inset -1px -1px 0 #888"></div><div class="t" style="top:545.2px;line-height:16px;font-size:12px;left:136.5px;transform:translateX(-50%);color:#222;">编辑...</div>
<div class="a" style="left:0px;top:582px;width:196px;height:0px;border-top:1px dotted #999"></div>
<div class="t" style="top:564.7px;line-height:16px;font-size:12px;left:6px;color:#000;">默认分析显示...</div>
<div class="t" style="top:564.7px;line-height:16px;font-size:12px;left:92px;color:#000;">无</div>
<div class="a" style="left:0px;top:602px;width:196px;height:0px;border-top:1px dotted #999"></div>
<div class="t" style="top:584.7px;line-height:16px;font-size:12px;left:6px;color:#000;">日光路径</div>
<div class="a" style="left:93px;top:586px;width:13px;height:13px;border:1px solid #333;background:#fff;box-sizing:border-box"></div>
<div class="a" style="left:0px;top:604px;width:196px;height:18px;background:#dcdcdc"></div>
<div class="t" style="top:605.8px;line-height:16px;font-size:12px;left:-1px;color:#111;">底图</div>
<svg class="a" style="left:181px;top:607px" width="10" height="12"><path d="M2 5l3-3l3 3M2 10l3-3l3 3" fill="none" stroke="#222" stroke-width="1.300"/></svg>
<div class="a" style="left:0px;top:642px;width:196px;height:0px;border-top:1px dotted #999"></div>
<div class="t" style="top:624.7px;line-height:16px;font-size:12px;left:6px;color:#000;">范围: 底部标高</div>
<div class="t" style="top:624.7px;line-height:16px;font-size:12px;left:92px;color:#000;">无</div>
<div class="a" style="left:0px;top:662px;width:196px;height:0px;border-top:1px dotted #999"></div>
<div class="t" style="top:644.7px;line-height:16px;font-size:12px;left:6px;color:#8a8a8a;">范围: 顶部标高</div>
<div class="t" style="top:644.7px;line-height:16px;font-size:12px;left:92px;color:#8a8a8a;">无边界</div>
<div class="a" style="left:0px;top:682px;width:196px;height:0px;border-top:1px dotted #999"></div>
<div class="t" style="top:664.7px;line-height:16px;font-size:12px;left:6px;color:#8a8a8a;">基线方向</div>
<div class="t" style="top:664.7px;line-height:16px;font-size:12px;left:92px;color:#8a8a8a;">俯视</div>
<div class="a" style="left:0px;top:684px;width:196px;height:18px;background:#dcdcdc"></div>
<div class="t" style="top:685.8px;line-height:16px;font-size:12px;left:-1px;color:#111;">范围</div>
<svg class="a" style="left:181px;top:687px" width="10" height="12"><path d="M2 5l3-3l3 3M2 10l3-3l3 3" fill="none" stroke="#222" stroke-width="1.300"/></svg>
<div class="a" style="left:0px;top:722px;width:196px;height:0px;border-top:1px dotted #999"></div>
<div class="t" style="top:704.7px;line-height:16px;font-size:12px;left:6px;color:#000;">裁剪视图</div>
<div class="a" style="left:93px;top:706px;width:13px;height:13px;border:1px solid #333;background:#fff;box-sizing:border-box"></div><svg class="a" style="left:93px;top:706px" width="13" height="13" viewBox="0 0 13 13"><path d="M3 6.500l2.500 3l4.500-6" fill="none" stroke="#222" stroke-width="1.500"/></svg>
<div class="a" style="left:0px;top:742px;width:196px;height:0px;border-top:1px dotted #999"></div>
<div class="t" style="top:724.7px;line-height:16px;font-size:12px;left:6px;color:#000;">裁剪区域可见</div>
<div class="a" style="left:93px;top:726px;width:13px;height:13px;border:1px solid #333;background:#fff;box-sizing:border-box"></div>
<div class="a" style="left:0px;top:762px;width:196px;height:0px;border-top:1px dotted #999"></div>
<div class="t" style="top:744.7px;line-height:16px;font-size:12px;left:6px;color:#000;">注释裁剪</div>
<div class="a" style="left:93px;top:746px;width:13px;height:13px;border:1px solid #333;background:#fff;box-sizing:border-box"></div>
<div class="a" style="left:0px;top:782px;width:196px;height:0px;border-top:1px dotted #999"></div>
<div class="t" style="top:764.7px;line-height:16px;font-size:12px;left:6px;color:#000;">视图范围</div>
<div class="a" style="left:91px;top:764px;width:91px;height:17px;background:#e1e1e1;border:1px solid #adadad;box-sizing:border-box;box-shadow:inset -1px -1px 0 #888"></div><div class="t" style="top:765.2px;line-height:16px;font-size:12px;left:136.5px;transform:translateX(-50%);color:#222;">编辑...</div>
<div class="a" style="left:0px;top:802px;width:196px;height:0px;border-top:1px dotted #999"></div>
<div class="t" style="top:784.7px;line-height:16px;font-size:12px;left:6px;color:#8a8a8a;">相关标高</div>
<div class="t" style="top:784.7px;line-height:16px;font-size:12px;left:92px;color:#8a8a8a;">F1</div>
<div class="a" style="left:0px;top:822px;width:196px;height:0px;border-top:1px dotted #999"></div>
<div class="t" style="top:804.7px;line-height:16px;font-size:12px;left:6px;color:#000;">范围框</div>
<div class="t" style="top:804.7px;line-height:16px;font-size:12px;left:92px;color:#000;">无</div>
<div class="a" style="left:0px;top:842px;width:196px;height:0px;border-top:1px dotted #999"></div>
<div class="t" style="top:824.7px;line-height:16px;font-size:12px;left:6px;color:#000;">截剪裁</div>
<div class="a" style="left:91px;top:824px;width:91px;height:17px;background:#e1e1e1;border:1px solid #adadad;box-sizing:border-box;box-shadow:inset -1px -1px 0 #888"></div><div class="t" style="top:825.2px;line-height:16px;font-size:12px;left:136.5px;transform:translateX(-50%);color:#222;">不剪裁</div>
<div class="a" style="left:0px;top:844px;width:196px;height:18px;background:#dcdcdc"></div>
<div class="t" style="top:845.8px;line-height:16px;font-size:12px;left:-1px;color:#111;">标识数据</div>
<svg class="a" style="left:181px;top:847px" width="10" height="12"><path d="M2 5l3-3l3 3M2 10l3-3l3 3" fill="none" stroke="#222" stroke-width="1.300"/></svg>
<div class="a" style="left:0px;top:882px;width:196px;height:0px;border-top:1px dotted #999"></div>
<div class="t" style="top:864.7px;line-height:16px;font-size:12px;left:6px;color:#000;">视图样板</div>
<div class="a" style="left:91px;top:864px;width:91px;height:17px;background:#e1e1e1;border:1px solid #adadad;box-sizing:border-box;box-shadow:inset -1px -1px 0 #888"></div><div class="t" style="top:865.2px;line-height:16px;font-size:12px;left:136.5px;transform:translateX(-50%);color:#222;">&lt;无&gt;</div>
<div class="a" style="left:0px;top:902px;width:196px;height:0px;border-top:1px dotted #999"></div>
<div class="t" style="top:884.7px;line-height:16px;font-size:12px;left:6px;color:#000;">视图名称</div>
<div class="t" style="top:884.7px;line-height:16px;font-size:12px;left:92px;color:#000;">F1拆改图</div>
<div class="a" style="left:0px;top:922px;width:196px;height:0px;border-top:1px dotted #999"></div>
<div class="t" style="top:904.7px;line-height:16px;font-size:12px;left:6px;color:#8a8a8a;">相关性</div>
<div class="t" style="top:904.7px;line-height:16px;font-size:12px;left:92px;color:#8a8a8a;">不相关</div>
<div class="a" style="left:0px;top:942px;width:196px;height:0px;border-top:1px dotted #999"></div>
<div class="t" style="top:924.7px;line-height:16px;font-size:12px;left:6px;color:#000;">图纸上的标题</div>
<div class="t" style="top:924.7px;line-height:16px;font-size:12px;left:92px;color:#000;"></div>
<div class="t" style="top:944.7px;line-height:16px;font-size:12px;left:6px;color:#8a8a8a;">参照图纸</div>
<div class="t" style="top:944.7px;line-height:16px;font-size:12px;left:92px;color:#8a8a8a;"></div>
<div class="a" style="left:196px;top:264px;width:16px;height:698px;background:#f0f0f0"></div>
<div class="a" style="left:196.5px;top:283px;width:14.5px;height:451px;background:#cdcdcd"></div>
<svg class="a" style="left:198px;top:267px" width="12" height="10"><path d="M2 7l4-4l4 4" fill="none" stroke="#333" stroke-width="1.300"/></svg>
<svg class="a" style="left:198px;top:947px" width="12" height="10"><path d="M2 3l4 4l4-4" fill="none" stroke="#333" stroke-width="1.300"/></svg>
<div class="t" style="top:966.5px;line-height:16px;font-size:12px;left:-1px;color:#0563c1;text-decoration:underline;">属性帮助</div>
<div class="a" style="left:137px;top:964px;width:73px;height:19px;background:#cfcfcf;border:1px dotted #b4b4b4;box-sizing:border-box"></div>
<div class="t" style="top:966.5px;line-height:16px;font-size:12px;left:173.5px;transform:translateX(-50%);color:#8c8c8c;">应用</div>
<!-- doc tabs -->
<div class="a" style="left:214px;top:143px;width:1503px;height:21px;background:#cccccc"></div>
<div class="a" style="left:214px;top:143px;width:2px;height:844px;background:#cccccc"></div>
<svg class="a" style="left:221px;top:146px" width="16" height="16"><path d="M8 1.500L1 8.500h3v6h8v-6h3z" fill="#f2f2f2" stroke="#6d7f8b" stroke-width="1.400" stroke-linejoin="round"/><path d="M8 1.500L1 8.500h14z" fill="#6d7f8b"/></svg>
<div class="t" style="top:146.5px;line-height:16px;font-size:12px;left:244px;color:#333;word-spacing:1px;">立面 4 - a</div>
<div class="a" style="left:344px;top:144px;width:128px;height:20px;background:#fafafa"></div>
<svg class="a" style="left:349px;top:146px" width="17" height="16"><rect x="1.500" y="1.500" width="10" height="12" fill="#fff" stroke="#444" stroke-width="1.100"/><rect x="6.500" y="6.500" width="9" height="8" fill="#fff" stroke="#444" stroke-width="1.100"/><path d="M6.500 3v3.500h9" fill="none" stroke="#444" stroke-dasharray="1.500 1"/></svg>
<div class="t" style="top:146.5px;line-height:16px;font-size:12px;left:372px;color:#111;font-weight:bold;">F1拆改图</div>
<svg class="a" style="left:457px;top:149px" width="12" height="12"><path d="M1.500 1.500l8 8M9.500 1.500l-8 8" stroke="#111" stroke-width="1.600"/></svg>
<svg class="a" style="left:1699px;top:149px" width="12" height="10"><path d="M1 1.500h10" stroke="#333" stroke-width="1.400"/><path d="M1.500 4h9l-4.500 5z" fill="#333"/></svg>
<!-- drawing -->
<svg class="a" style="left:216px;top:164px;background:#fafafa" width="1481" height="804" viewBox="216 164 1481 804" font-family="Liberation Sans,sans-serif">
<g stroke="#111" stroke-width="1.100" fill="none">
<path d="M586.500 307.5H1398" stroke-dasharray="31.500 8 8 8"/>
<path d="M586.500 407.5H1398" stroke-dasharray="31.500 8 8 8"/>
<path d="M586.500 607.5H1398" stroke-dasharray="31.500 8 8 8"/>
<path d="M586.500 757.5H1398" stroke-dasharray="31.500 8 8 8"/>
<path d="M586.500 824.2H1398" stroke-dasharray="31.500 8 8 8"/>
<path d="M729.5 167.0V962" stroke-dasharray="31.500 8 8 8" stroke-dashoffset="8.6"/>
<path d="M916.2 167.0V962" stroke-dasharray="31.500 8 8 8" stroke-dashoffset="8.6"/>
<path d="M1139.5 167.0V962" stroke-dasharray="31.500 8 8 8" stroke-dashoffset="8.6"/>
<path d="M1242.8 167.0V962" stroke-dasharray="31.500 8 8 8" stroke-dashoffset="8.6"/>
</g>
<g stroke="#111" stroke-width="1.600" fill="none">
<rect x="726.2" y="820.9" width="520" height="6.7"/>
<rect x="726.2" y="304.2" width="520" height="6.7"/>
<rect x="726.2" y="304.2" width="6.7" height="523.3"/>
<rect x="1239.5" y="304.2" width="6.7" height="523.3"/>
<rect x="732.8" y="404.2" width="116.7" height="6.7"/>
<rect x="842.8" y="410.9" width="6.7" height="9.5"/>
<rect x="842.8" y="449" width="6.7" height="71.9"/>
<rect x="732.8" y="520.9" width="116.7" height="6.7"/>
<rect x="912.8" y="604.2" width="6.7" height="216.7"/>
<rect x="919.5" y="604.2" width="3.9" height="6.7"/>
<rect x="971.3" y="604.2" width="233.3" height="6.7"/>
<rect x="1230.8" y="604.2" width="8.7" height="6.7"/>
<rect x="1136.2" y="310.9" width="6.7" height="10.4"/>
<rect x="1136.2" y="350" width="6.7" height="60.9"/>
<rect x="1136.2" y="404.2" width="103.3" height="6.7"/>
</g>
<g fill="#dedede">
<rect x="726.2" y="820.9" width="520" height="6.7"/>
<rect x="726.2" y="304.2" width="520" height="6.7"/>
<rect x="726.2" y="304.2" width="6.7" height="523.3"/>
<rect x="1239.5" y="304.2" width="6.7" height="523.3"/>
<rect x="732.8" y="404.2" width="116.7" height="6.7"/>
<rect x="842.8" y="410.9" width="6.7" height="9.5"/>
<rect x="842.8" y="449" width="6.7" height="71.9"/>
<rect x="732.8" y="520.9" width="116.7" height="6.7"/>
<rect x="912.8" y="604.2" width="6.7" height="216.7"/>
<rect x="919.5" y="604.2" width="3.9" height="6.7"/>
<rect x="971.3" y="604.2" width="233.3" height="6.7"/>
<rect x="1230.8" y="604.2" width="8.7" height="6.7"/>
<rect x="1136.2" y="310.9" width="6.7" height="10.4"/>
<rect x="1136.2" y="350" width="6.7" height="60.9"/>
<rect x="1136.2" y="404.2" width="103.3" height="6.7"/>
</g>
<g stroke="#111" stroke-width="1" fill="none" stroke-dasharray="14 5">
<path d="M729.5 307.5H1242.8M729.5 824.2H1242.8M729.5 307.5V824.2M1242.8 307.5V824.2"/>
<path d="M732.8 407.5H849.5M1139.5 407.5H1239.5M916.2 607.5H1239.5M916.2 607.5V820.9M1139.5 310.9V410.9"/>
</g>
<g stroke="#111" stroke-width="1" fill="#fafafa">
<rect x="746.3" y="304.2" width="93.3" height="6.7"/>
<path d="M746.3 306.4h93.3M746.3 308.6h93.3" stroke-width="1.300"/>
<rect x="989.7" y="304.2" width="93.3" height="6.7"/>
<path d="M989.7 306.4h93.3M989.7 308.6h93.3" stroke-width="1.300"/>
<rect x="942.8" y="820.9" width="93.3" height="6.7"/>
<path d="M942.8 823.1h93.3M942.8 825.3h93.3" stroke-width="1.300"/>
<rect x="726.2" y="418.4" width="6.7" height="93.3"/>
<path d="M728.4 418.4v93.3M730.6 418.4v93.3" stroke-width="1.300"/>
<rect x="726.2" y="639.4" width="6.7" height="93.3"/>
<path d="M728.4 639.4v93.3M730.6 639.4v93.3" stroke-width="1.300"/>
<rect x="1239.5" y="454.5" width="6.7" height="93.3"/>
<path d="M1241.7 454.5v93.3M1243.9 454.5v93.3" stroke-width="1.300"/>
<rect x="1239.5" y="670.2" width="6.7" height="93.3"/>
<path d="M1241.7 670.2v93.3M1243.9 670.2v93.3" stroke-width="1.300"/>
</g>
<g stroke="#ff0000" stroke-width="1.300" fill="none" stroke-dasharray="6 2.500">
<rect x="912.8" y="310.9" width="6.7" height="10.4"/>
<rect x="912.8" y="350" width="6.7" height="60.9"/>
<rect x="849.5" y="404.2" width="70" height="6.7"/>
<rect x="849.5" y="520.9" width="70" height="6.7"/>
<rect x="912.8" y="527.5" width="6.7" height="8.3"/>
<rect x="912.8" y="564" width="6.7" height="40.2"/>
<rect x="919.5" y="754.2" width="15.5" height="6.7"/>
<rect x="962" y="754.2" width="174.2" height="6.7"/>
<rect x="1136.2" y="610.9" width="6.7" height="210"/>
<path d="M913.800 322H884.400M884.400 323.500A29.400 29.400 0 0 0 913.800 350" stroke-dasharray="5 2.500"/>
<path d="M913.800 536.500H884.400M884.400 538A29.400 28 0 0 0 913.800 564" stroke-dasharray="5 2.500"/>
<path d="M935.500 760V789M935.500 789A27 29 0 0 0 962 760" stroke-dasharray="5 2.500"/>
</g>
<g stroke="#ff0000" stroke-width="1.800" fill="none"><path d="M913.500 321.300h7M913.500 350h7M913.500 535.800h7M913.500 564h7M935 754.500v6M962 754.500v6"/></g>
<g stroke="#0000ff" stroke-width="1.100" fill="#fafafa">
<rect x="846.2" y="310.9" width="3.3" height="56.8"/>
<rect x="846.2" y="396.4" width="3.3" height="7.8"/>
<rect x="846.2" y="527.5" width="3.3" height="76.7"/>
<rect x="732.8" y="604.2" width="147.5" height="3.3"/>
<rect x="1136.2" y="410.9" width="3.3" height="193.3"/>
<rect x="1076.2" y="610.9" width="3.3" height="210"/>
</g>
<g stroke="#0000ff" stroke-width="1.100" fill="none">
<path d="M848 367.700A30 28.700 0 0 0 818 396.400"/><path d="M818 396.400H846" stroke-dasharray="4 2.500"/><path d="M846 367.700h4M846 396.400h4" stroke-width="1.800"/>
<path d="M825.300 540.600H846.700M825.300 585.400H846.700M825.300 540.600V543M825.300 585.400V583" stroke-dasharray="4 2.500"/><path d="M825.300 541A21.400 22 0 0 0 845 563M825.300 585A21.400 22 0 0 1 845 563" stroke-dasharray="4 3"/><path d="M845 540.600h5M845 585.400h5" stroke-width="2.600"/>
<path d="M880.300 606.500A28 29 0 0 0 908 635.500"/><path d="M907.400 606V635.500M910 606V635.500" stroke-dasharray="4 2.500"/><path d="M908 604.500h3.500v3" />
<path d="M1138 504A30.500 28.600 0 0 1 1168.500 532.600"/><path d="M1139 532.600H1170" stroke-dasharray="4 2.500" stroke-width="1.600"/><path d="M1134.500 504h5M1134.500 532.600h5" stroke-width="1.800"/>
</g>
<g stroke="#111" fill="none">
<path d="M814.800 421.200H850" stroke-width="2.200"/><path d="M814.800 422A28.700 27 0 0 0 843.500 449" stroke-width="1" stroke-dasharray="5 2.500"/>
<path d="M1135.600 322.200H1173.300" stroke-width="2.200"/><path d="M1173.300 323A30 27 0 0 1 1143 350" stroke-width="1" stroke-dasharray="5 2.500"/><path d="M1135 350h8.500" stroke-width="2"/>
<path d="M924.200 603.500V615M971 603.500V615" stroke-width="3.800"/><path d="M923.800 615V629.700M971.400 615V629.700" stroke-width="2.400"/><path d="M923 629H928.500M972.200 629H966.700" stroke-width="1.600"/><path d="M926 608.300H969" stroke-width="3.400"/><path d="M931 627.800H936.500L946.300 612M964 627.800H958.500L948.500 612" stroke-width="1" stroke-dasharray="5 3"/>
<path d="M1203.300 584V613.500" stroke-width="2.600"/><path d="M1204.600 584.500A27 23 0 0 1 1230.800 607" stroke-width="1" stroke-dasharray="4 2.500"/><path d="M1230.800 604.200v6.600" stroke-width="1.200"/>
</g>
<g stroke="#111" stroke-width="1.100" fill="none">
<path d="M729.500 167.500H1242.800M729.500 184.300H1242.800M726.200 202.300H1246.200"/>
<path d="M746.3 201V222"/>
<path d="M849.5 201V222"/>
<path d="M989.7 201V222"/>
<path d="M1083 201V222"/>
<path d="M726.2 213.500V222"/>
<path d="M732.8 213.500V222"/>
<path d="M839.7 213.500V222"/>
<path d="M846.2 213.500V222"/>
<path d="M912.8 202V222"/>
<path d="M919.5 202V222"/>
<path d="M1136.2 202V222"/>
<path d="M1142.8 202V222"/>
<path d="M1239.5 202V222"/>
<path d="M1246.2 202V222"/>
<path d="M726.200 922.900H1246.200M729.500 940.600H1242.800M729.500 956.900H1242.800"/>
<path d="M726.2 903.400V910M726.2 922V925"/>
<path d="M732.8 903.400V910M732.8 922V925"/>
<path d="M912.8 903.400V910M912.8 922V925"/>
<path d="M919.5 903.400V910M919.5 922V925"/>
<path d="M1136.2 903.400V910M1136.2 922V925"/>
<path d="M1142.8 903.400V910M1142.8 922V925"/>
<path d="M1239.5 903.400V910M1239.5 922V925"/>
<path d="M1246.2 903.400V910M1246.2 922V925"/>
<path d="M942.8 903.400V925"/>
<path d="M1036.2 903.400V925"/>
<path d="M588.500 307.5V824.2M605.500 307.5V824.2M623.700 304.2V827.5"/>
<path d="M623.700 304.2H642"/>
<path d="M623.700 310.9H642"/>
<path d="M623.700 404.2H642"/>
<path d="M623.700 410.9H642"/>
<path d="M623.700 418.4H642"/>
<path d="M623.700 511.7H642"/>
<path d="M623.700 520.9H642"/>
<path d="M623.700 527.5H642"/>
<path d="M623.700 604.2H642"/>
<path d="M623.700 607.5H642"/>
<path d="M623.700 639.4H642"/>
<path d="M623.700 732.7H642"/>
<path d="M623.700 820.9H642"/>
<path d="M623.700 827.5H642"/>
<path d="M1393.500 307.5V824.2M1376 307.5V824.2M1358.500 304.2V827.5"/>
<path d="M1358.500 304.2H1339.500"/>
<path d="M1358.500 310.9H1339.500"/>
<path d="M1358.500 404.2H1339.500"/>
<path d="M1358.500 410.9H1339.500"/>
<path d="M1358.500 454.5H1339.500"/>
<path d="M1358.500 547.9H1339.500"/>
<path d="M1358.500 604.2H1339.500"/>
<path d="M1358.500 610.9H1339.500"/>
<path d="M1358.500 670.2H1339.500"/>
<path d="M1358.500 763.5H1339.500"/>
<path d="M1358.500 820.9H1339.500"/>
<path d="M1358.500 827.5H1339.500"/>
</g>
<g stroke="#111" stroke-width="1.100">
<path d="M584 307.5H642M1339.500 307.5H1398"/>
<path d="M584 407.5H642M1339.500 407.5H1398"/>
<path d="M584 607.5H642M1339.500 607.5H1398"/>
<path d="M584 757.5H642M1339.500 757.5H1398"/>
<path d="M584 824.2H642M1339.500 824.2H1398"/>
<path d="M729.5 167V222M729.5 903V962"/>
<path d="M916.2 167V222M916.2 903V962"/>
<path d="M1139.5 167V222M1139.5 903V962"/>
<path d="M1242.8 167V222M1242.8 903V962"/>
</g>
<g>
<text x="823" y="181.6" text-anchor="middle" font-size="10.5" textLength="16.4" lengthAdjust="spacingAndGlyphs" stroke="#fafafa" stroke-width="2.500" paint-order="stroke" fill="#000">5600</text>
<text x="823" y="937.8" text-anchor="middle" font-size="10.5" textLength="16.4" lengthAdjust="spacingAndGlyphs" stroke="#fafafa" stroke-width="2.500" paint-order="stroke" fill="#000">5600</text>
<text x="1028" y="181.6" text-anchor="middle" font-size="10.5" textLength="16.4" lengthAdjust="spacingAndGlyphs" stroke="#fafafa" stroke-width="2.500" paint-order="stroke" fill="#000">6700</text>
<text x="1028" y="937.8" text-anchor="middle" font-size="10.5" textLength="16.4" lengthAdjust="spacingAndGlyphs" stroke="#fafafa" stroke-width="2.500" paint-order="stroke" fill="#000">6700</text>
<text x="1191" y="181.6" text-anchor="middle" font-size="10.5" textLength="16.4" lengthAdjust="spacingAndGlyphs" stroke="#fafafa" stroke-width="2.500" paint-order="stroke" fill="#000">3100</text>
<text x="1191" y="937.8" text-anchor="middle" font-size="10.5" textLength="16.4" lengthAdjust="spacingAndGlyphs" stroke="#fafafa" stroke-width="2.500" paint-order="stroke" fill="#000">3100</text>
<text x="740" y="200" text-anchor="middle" font-size="10.5" textLength="12.3" lengthAdjust="spacingAndGlyphs" stroke="#fafafa" stroke-width="2.500" paint-order="stroke" fill="#000">405</text>
<text x="793" y="200" text-anchor="middle" font-size="10.5" textLength="16.4" lengthAdjust="spacingAndGlyphs" stroke="#fafafa" stroke-width="2.500" paint-order="stroke" fill="#000">2800</text>
<text x="848.8" y="200" text-anchor="middle" font-size="10.5" textLength="12.3" lengthAdjust="spacingAndGlyphs" stroke="#fafafa" stroke-width="2.500" paint-order="stroke" fill="#000">100</text>
<text x="882" y="200" text-anchor="middle" font-size="10.5" textLength="16.4" lengthAdjust="spacingAndGlyphs" stroke="#fafafa" stroke-width="2.500" paint-order="stroke" fill="#000">1900</text>
<text x="915.8" y="200" text-anchor="middle" font-size="10.5" textLength="12.3" lengthAdjust="spacingAndGlyphs" stroke="#fafafa" stroke-width="2.500" paint-order="stroke" fill="#000">200</text>
<text x="954.7" y="200" text-anchor="middle" font-size="10.5" textLength="16.4" lengthAdjust="spacingAndGlyphs" stroke="#fafafa" stroke-width="2.500" paint-order="stroke" fill="#000">2105</text>
<text x="1036" y="200" text-anchor="middle" font-size="10.5" textLength="16.4" lengthAdjust="spacingAndGlyphs" stroke="#fafafa" stroke-width="2.500" paint-order="stroke" fill="#000">2800</text>
<text x="1111" y="200" text-anchor="middle" font-size="10.5" textLength="16.4" lengthAdjust="spacingAndGlyphs" stroke="#fafafa" stroke-width="2.500" paint-order="stroke" fill="#000">1595</text>
<text x="1139" y="200" text-anchor="middle" font-size="10.5" textLength="12.3" lengthAdjust="spacingAndGlyphs" stroke="#fafafa" stroke-width="2.500" paint-order="stroke" fill="#000">200</text>
<text x="1191" y="200" text-anchor="middle" font-size="10.5" textLength="16.4" lengthAdjust="spacingAndGlyphs" stroke="#fafafa" stroke-width="2.500" paint-order="stroke" fill="#000">2900</text>
<text x="1243" y="200" text-anchor="middle" font-size="10.5" textLength="12.3" lengthAdjust="spacingAndGlyphs" stroke="#fafafa" stroke-width="2.500" paint-order="stroke" fill="#000">200</text>
<text x="730" y="211.2" text-anchor="middle" font-size="10.5" textLength="12.3" lengthAdjust="spacingAndGlyphs" stroke="#fafafa" stroke-width="2.500" paint-order="stroke" fill="#000">200</text>
<text x="843.7" y="211.2" text-anchor="middle" font-size="10.5" textLength="12.3" lengthAdjust="spacingAndGlyphs" stroke="#fafafa" stroke-width="2.500" paint-order="stroke" fill="#000">195</text>
<text x="730" y="920.1" text-anchor="middle" font-size="10.5" textLength="12.3" lengthAdjust="spacingAndGlyphs" stroke="#fafafa" stroke-width="2.500" paint-order="stroke" fill="#000">200</text>
<text x="823" y="920.1" text-anchor="middle" font-size="10.5" textLength="16.4" lengthAdjust="spacingAndGlyphs" stroke="#fafafa" stroke-width="2.500" paint-order="stroke" fill="#000">5400</text>
<text x="915.8" y="920.1" text-anchor="middle" font-size="10.5" textLength="12.3" lengthAdjust="spacingAndGlyphs" stroke="#fafafa" stroke-width="2.500" paint-order="stroke" fill="#000">200</text>
<text x="931.5" y="920.1" text-anchor="middle" font-size="10.5" textLength="12.3" lengthAdjust="spacingAndGlyphs" stroke="#fafafa" stroke-width="2.500" paint-order="stroke" fill="#000">700</text>
<text x="989.5" y="920.1" text-anchor="middle" font-size="10.5" textLength="16.4" lengthAdjust="spacingAndGlyphs" stroke="#fafafa" stroke-width="2.500" paint-order="stroke" fill="#000">2800</text>
<text x="1137.4" y="920.1" text-anchor="middle" font-size="10.5" textLength="16.4" lengthAdjust="spacingAndGlyphs" stroke="#fafafa" stroke-width="2.500" paint-order="stroke" fill="#000">3100</text>
<text x="1191" y="920.1" text-anchor="middle" font-size="10.5" textLength="16.4" lengthAdjust="spacingAndGlyphs" stroke="#fafafa" stroke-width="2.500" paint-order="stroke" fill="#000">2900</text>
<text x="1243" y="920.1" text-anchor="middle" font-size="10.5" textLength="12.3" lengthAdjust="spacingAndGlyphs" stroke="#fafafa" stroke-width="2.500" paint-order="stroke" fill="#000">200</text>
<text x="986" y="954.6" text-anchor="middle" font-size="10.5" textLength="22" lengthAdjust="spacingAndGlyphs" stroke="#fafafa" stroke-width="2.500" paint-order="stroke" fill="#000">15400</text>
<rect x="577" y="552" width="12.300" height="24" fill="#fafafa"/><text x="584" y="567.6" text-anchor="middle" font-size="10.5" textLength="22" lengthAdjust="spacingAndGlyphs" transform="rotate(-90 584 564)" stroke="#fafafa" stroke-width="2.500" paint-order="stroke" fill="#000">15500</text>
<rect x="594" y="347.8" width="12.300" height="18.4" fill="#fafafa"/><text x="601" y="360.6" text-anchor="middle" font-size="10.5" textLength="16.4" lengthAdjust="spacingAndGlyphs" transform="rotate(-90 601 357)" stroke="#fafafa" stroke-width="2.500" paint-order="stroke" fill="#000">3000</text>
<rect x="1364.5" y="347.8" width="12.300" height="18.4" fill="#fafafa"/><text x="1371.5" y="360.6" text-anchor="middle" font-size="10.5" textLength="16.4" lengthAdjust="spacingAndGlyphs" transform="rotate(-90 1371.5 357)" stroke="#fafafa" stroke-width="2.500" paint-order="stroke" fill="#000">3000</text>
<rect x="594" y="497.8" width="12.300" height="18.4" fill="#fafafa"/><text x="601" y="510.6" text-anchor="middle" font-size="10.5" textLength="16.4" lengthAdjust="spacingAndGlyphs" transform="rotate(-90 601 507)" stroke="#fafafa" stroke-width="2.500" paint-order="stroke" fill="#000">6000</text>
<rect x="1364.5" y="497.8" width="12.300" height="18.4" fill="#fafafa"/><text x="1371.5" y="510.6" text-anchor="middle" font-size="10.5" textLength="16.4" lengthAdjust="spacingAndGlyphs" transform="rotate(-90 1371.5 507)" stroke="#fafafa" stroke-width="2.500" paint-order="stroke" fill="#000">6000</text>
<rect x="594" y="672.8" width="12.300" height="18.4" fill="#fafafa"/><text x="601" y="685.6" text-anchor="middle" font-size="10.5" textLength="16.4" lengthAdjust="spacingAndGlyphs" transform="rotate(-90 601 682)" stroke="#fafafa" stroke-width="2.500" paint-order="stroke" fill="#000">4500</text>
<rect x="1364.5" y="672.8" width="12.300" height="18.4" fill="#fafafa"/><text x="1371.5" y="685.6" text-anchor="middle" font-size="10.5" textLength="16.4" lengthAdjust="spacingAndGlyphs" transform="rotate(-90 1371.5 682)" stroke="#fafafa" stroke-width="2.500" paint-order="stroke" fill="#000">4500</text>
<rect x="594" y="781.8" width="12.300" height="18.4" fill="#fafafa"/><text x="601" y="794.6" text-anchor="middle" font-size="10.5" textLength="16.4" lengthAdjust="spacingAndGlyphs" transform="rotate(-90 601 791)" stroke="#fafafa" stroke-width="2.500" paint-order="stroke" fill="#000">2000</text>
<rect x="1364.5" y="781.8" width="12.300" height="18.4" fill="#fafafa"/><text x="1371.5" y="794.6" text-anchor="middle" font-size="10.5" textLength="16.4" lengthAdjust="spacingAndGlyphs" transform="rotate(-90 1371.5 791)" stroke="#fafafa" stroke-width="2.500" paint-order="stroke" fill="#000">2000</text>
<rect x="612" y="300.4" width="12.300" height="14.3" fill="#fafafa"/><text x="619" y="311.1" text-anchor="middle" font-size="10.5" textLength="12.3" lengthAdjust="spacingAndGlyphs" transform="rotate(-90 619 307.5)" stroke="#fafafa" stroke-width="2.500" paint-order="stroke" fill="#000">200</text>
<rect x="612" y="347.8" width="12.300" height="18.4" fill="#fafafa"/><text x="619" y="360.6" text-anchor="middle" font-size="10.5" textLength="16.4" lengthAdjust="spacingAndGlyphs" transform="rotate(-90 619 357)" stroke="#fafafa" stroke-width="2.500" paint-order="stroke" fill="#000">2800</text>
<rect x="612" y="400.4" width="12.300" height="14.3" fill="#fafafa"/><text x="619" y="411.1" text-anchor="middle" font-size="10.5" textLength="12.3" lengthAdjust="spacingAndGlyphs" transform="rotate(-90 619 407.5)" stroke="#fafafa" stroke-width="2.500" paint-order="stroke" fill="#000">200</text>
<rect x="612" y="455.8" width="12.300" height="18.4" fill="#fafafa"/><text x="619" y="468.6" text-anchor="middle" font-size="10.5" textLength="16.4" lengthAdjust="spacingAndGlyphs" transform="rotate(-90 619 465)" stroke="#fafafa" stroke-width="2.500" paint-order="stroke" fill="#000">2800</text>
<rect x="612" y="508.9" width="12.300" height="14.3" fill="#fafafa"/><text x="619" y="519.6" text-anchor="middle" font-size="10.5" textLength="12.3" lengthAdjust="spacingAndGlyphs" transform="rotate(-90 619 516)" stroke="#fafafa" stroke-width="2.500" paint-order="stroke" fill="#000">275</text>
<rect x="612" y="555.8" width="12.300" height="18.4" fill="#fafafa"/><text x="619" y="568.6" text-anchor="middle" font-size="10.5" textLength="16.4" lengthAdjust="spacingAndGlyphs" transform="rotate(-90 619 565)" stroke="#fafafa" stroke-width="2.500" paint-order="stroke" fill="#000">2300</text>
<rect x="612" y="597.4" width="12.300" height="14.3" fill="#fafafa"/><text x="619" y="608.1" text-anchor="middle" font-size="10.5" textLength="12.3" lengthAdjust="spacingAndGlyphs" transform="rotate(-90 619 604.5)" stroke="#fafafa" stroke-width="2.500" paint-order="stroke" fill="#000">100</text>
<rect x="612" y="614.9" width="12.300" height="14.3" fill="#fafafa"/><text x="619" y="625.6" text-anchor="middle" font-size="10.5" textLength="12.3" lengthAdjust="spacingAndGlyphs" transform="rotate(-90 619 622)" stroke="#fafafa" stroke-width="2.500" paint-order="stroke" fill="#000">955</text>
<rect x="612" y="675.8" width="12.300" height="18.4" fill="#fafafa"/><text x="619" y="688.6" text-anchor="middle" font-size="10.5" textLength="16.4" lengthAdjust="spacingAndGlyphs" transform="rotate(-90 619 685)" stroke="#fafafa" stroke-width="2.500" paint-order="stroke" fill="#000">2800</text>
<rect x="612" y="766.8" width="12.300" height="18.4" fill="#fafafa"/><text x="619" y="779.6" text-anchor="middle" font-size="10.5" textLength="16.4" lengthAdjust="spacingAndGlyphs" transform="rotate(-90 619 776)" stroke="#fafafa" stroke-width="2.500" paint-order="stroke" fill="#000">2645</text>
<rect x="612" y="814.9" width="12.300" height="14.3" fill="#fafafa"/><text x="619" y="825.6" text-anchor="middle" font-size="10.5" textLength="12.3" lengthAdjust="spacingAndGlyphs" transform="rotate(-90 619 822)" stroke="#fafafa" stroke-width="2.500" paint-order="stroke" fill="#000">200</text>
<text x="630" y="417.1" text-anchor="middle" font-size="10.5" textLength="12.3" lengthAdjust="spacingAndGlyphs" transform="rotate(-90 630 413.5)" stroke="#fafafa" stroke-width="2.500" paint-order="stroke" fill="#000">225</text>
<text x="630" y="527.3" text-anchor="middle" font-size="10.5" textLength="12.3" lengthAdjust="spacingAndGlyphs" transform="rotate(-90 630 523.7)" stroke="#fafafa" stroke-width="2.500" paint-order="stroke" fill="#000">200</text>
<rect x="1382.5" y="552" width="12.300" height="24" fill="#fafafa"/><text x="1389.5" y="567.6" text-anchor="middle" font-size="10.5" textLength="22" lengthAdjust="spacingAndGlyphs" transform="rotate(-90 1389.5 564)" stroke="#fafafa" stroke-width="2.500" paint-order="stroke" fill="#000">15500</text>
<rect x="1347" y="300.4" width="12.300" height="14.3" fill="#fafafa"/><text x="1354" y="311.1" text-anchor="middle" font-size="10.5" textLength="12.3" lengthAdjust="spacingAndGlyphs" transform="rotate(-90 1354 307.5)" stroke="#fafafa" stroke-width="2.500" paint-order="stroke" fill="#000">200</text>
<rect x="1347" y="347.8" width="12.300" height="18.4" fill="#fafafa"/><text x="1354" y="360.6" text-anchor="middle" font-size="10.5" textLength="16.4" lengthAdjust="spacingAndGlyphs" transform="rotate(-90 1354 357)" stroke="#fafafa" stroke-width="2.500" paint-order="stroke" fill="#000">2800</text>
<rect x="1347" y="400.4" width="12.300" height="14.3" fill="#fafafa"/><text x="1354" y="411.1" text-anchor="middle" font-size="10.5" textLength="12.3" lengthAdjust="spacingAndGlyphs" transform="rotate(-90 1354 407.5)" stroke="#fafafa" stroke-width="2.500" paint-order="stroke" fill="#000">200</text>
<rect x="1347" y="421.8" width="12.300" height="18.4" fill="#fafafa"/><text x="1354" y="434.6" text-anchor="middle" font-size="10.5" textLength="16.4" lengthAdjust="spacingAndGlyphs" transform="rotate(-90 1354 431)" stroke="#fafafa" stroke-width="2.500" paint-order="stroke" fill="#000">1310</text>
<rect x="1347" y="491.8" width="12.300" height="18.4" fill="#fafafa"/><text x="1354" y="504.6" text-anchor="middle" font-size="10.5" textLength="16.4" lengthAdjust="spacingAndGlyphs" transform="rotate(-90 1354 501)" stroke="#fafafa" stroke-width="2.500" paint-order="stroke" fill="#000">2800</text>
<rect x="1347" y="564.8" width="12.300" height="18.4" fill="#fafafa"/><text x="1354" y="577.6" text-anchor="middle" font-size="10.5" textLength="16.4" lengthAdjust="spacingAndGlyphs" transform="rotate(-90 1354 574)" stroke="#fafafa" stroke-width="2.500" paint-order="stroke" fill="#000">1690</text>
<rect x="1347" y="600.4" width="12.300" height="14.3" fill="#fafafa"/><text x="1354" y="611.1" text-anchor="middle" font-size="10.5" textLength="12.3" lengthAdjust="spacingAndGlyphs" transform="rotate(-90 1354 607.5)" stroke="#fafafa" stroke-width="2.500" paint-order="stroke" fill="#000">200</text>
<rect x="1347" y="629.8" width="12.300" height="18.4" fill="#fafafa"/><text x="1354" y="642.6" text-anchor="middle" font-size="10.5" textLength="16.4" lengthAdjust="spacingAndGlyphs" transform="rotate(-90 1354 639)" stroke="#fafafa" stroke-width="2.500" paint-order="stroke" fill="#000">1780</text>
<rect x="1347" y="706.8" width="12.300" height="18.4" fill="#fafafa"/><text x="1354" y="719.6" text-anchor="middle" font-size="10.5" textLength="16.4" lengthAdjust="spacingAndGlyphs" transform="rotate(-90 1354 716)" stroke="#fafafa" stroke-width="2.500" paint-order="stroke" fill="#000">2800</text>
<rect x="1347" y="780.3" width="12.300" height="18.4" fill="#fafafa"/><text x="1354" y="793.1" text-anchor="middle" font-size="10.5" textLength="16.4" lengthAdjust="spacingAndGlyphs" transform="rotate(-90 1354 789.5)" stroke="#fafafa" stroke-width="2.500" paint-order="stroke" fill="#000">1720</text>
<rect x="1347" y="814.9" width="12.300" height="14.3" fill="#fafafa"/><text x="1354" y="825.6" text-anchor="middle" font-size="10.5" textLength="12.3" lengthAdjust="spacingAndGlyphs" transform="rotate(-90 1354 822)" stroke="#fafafa" stroke-width="2.500" paint-order="stroke" fill="#000">200</text>
</g>
<g stroke="#111" stroke-width="1.100" fill="#fafafa">
<circle cx="574.3" cy="307.5" r="9.700"/>
<circle cx="1407.4" cy="307.5" r="9.700"/>
<circle cx="574.3" cy="407.5" r="9.700"/>
<circle cx="1407.4" cy="407.5" r="9.700"/>
<circle cx="574.3" cy="607.5" r="9.700"/>
<circle cx="1407.4" cy="607.5" r="9.700"/>
<circle cx="574.3" cy="757.5" r="9.700"/>
<circle cx="1407.4" cy="757.5" r="9.700"/>
<circle cx="574.3" cy="824.2" r="9.700"/>
<circle cx="1407.4" cy="824.2" r="9.700"/>
<circle cx="729.5" cy="970.600" r="9.700"/>
<circle cx="916.2" cy="970.600" r="9.700"/>
<circle cx="1139.5" cy="970.600" r="9.700"/>
<circle cx="1242.8" cy="970.600" r="9.700"/>
</g>
<g font-family="Liberation Serif,serif" font-size="13" fill="#111" text-anchor="middle">
<text x="574.3" y="312" textLength="5.500" lengthAdjust="spacingAndGlyphs">E</text>
<text x="1407.4" y="312" textLength="5.500" lengthAdjust="spacingAndGlyphs">E</text>
<text x="574.3" y="412" textLength="5.500" lengthAdjust="spacingAndGlyphs">D</text>
<text x="1407.4" y="412" textLength="5.500" lengthAdjust="spacingAndGlyphs">D</text>
<text x="574.3" y="612" textLength="5.500" lengthAdjust="spacingAndGlyphs">C</text>
<text x="1407.4" y="612" textLength="5.500" lengthAdjust="spacingAndGlyphs">C</text>
<text x="574.3" y="762" textLength="5.500" lengthAdjust="spacingAndGlyphs">B</text>
<text x="1407.4" y="762" textLength="5.500" lengthAdjust="spacingAndGlyphs">B</text>
<text x="574.3" y="828.7" textLength="5.500" lengthAdjust="spacingAndGlyphs">A</text>
<text x="1407.4" y="828.7" textLength="5.500" lengthAdjust="spacingAndGlyphs">A</text>
<text x="729.5" y="975.500" textLength="4.500" lengthAdjust="spacingAndGlyphs">1</text>
<text x="916.2" y="975.500" textLength="4.500" lengthAdjust="spacingAndGlyphs">2</text>
<text x="1139.5" y="975.500" textLength="4.500" lengthAdjust="spacingAndGlyphs">3</text>
<text x="1242.8" y="975.500" textLength="4.500" lengthAdjust="spacingAndGlyphs">4</text>
</g>
</svg>
<!-- canvas chrome -->
<div class="a" style="left:1661px;top:166px;width:35px;height:118px;background:#f6f5f7;border:2px solid #b4b4b4;border-radius:6px;box-sizing:border-box"></div>
<svg class="a" style="left:1661px;top:166px" width="35" height="118" viewBox="0 0 35 118"><circle cx="27" cy="7.500" r="3.500" fill="#ddd" stroke="#aaa"/><path d="M25 5.500l4 4M29 5.500l-4 4" stroke="#999" stroke-width=".8"/><path d="M14 22.400H23V31.400A9 9 0 1 1 14 22.400z" fill="#e8e4ee" stroke="#aaa" stroke-width="1.200"/><circle cx="14" cy="31.400" r="4.300" fill="#f6f5f7" stroke="#aaa" stroke-width="1.200"/><text x="17" y="46" font-family="Liberation Sans,sans-serif" font-size="9" font-weight="bold" fill="#4a8fc7" textLength="12">2D</text><path d="M13.500 50.500h6l-3 3.500z" fill="#888"/><path d="M4 58.500h26" stroke="#bbb"/><rect x="9" y="67" width="11" height="11" fill="#a9cf98"/><circle cx="21" cy="78" r="3.500" fill="#f4f4f4" stroke="#999" stroke-width="1.200"/><path d="M23.500 80.500l3 3" stroke="#999" stroke-width="1.600"/><path d="M13.500 92.500h6l-3 3.500z" fill="#888"/><circle cx="27" cy="110" r="3.500" fill="#ddd" stroke="#aaa"/><path d="M25 110h4" stroke="#888"/></svg>
<div class="a" style="left:1697px;top:164px;width:15px;height:804px;background:#f1f0f3"></div>
<div class="a" style="left:1712px;top:164px;width:3px;height:823px;background:#fafafa"></div>
<div class="a" style="left:1715px;top:143px;width:2px;height:844px;background:#cccccc"></div>
<div class="a" style="left:1698px;top:560px;width:13px;height:16px;background:#cdcdcd"></div>
<svg class="a" style="left:1698px;top:170px" width="13" height="10"><path d="M2 8l4.500-4.500l4.500 4.500" fill="none" stroke="#333" stroke-width="1.600"/></svg>
<svg class="a" style="left:1698px;top:954px" width="13" height="10"><path d="M2 2l4.500 4.500l4.500-4.500" fill="none" stroke="#333" stroke-width="1.600"/></svg>
<div class="a" style="left:216px;top:968px;width:1496px;height:19px;background:#f1f0f3"></div>
<div class="t" style="top:968.3px;line-height:16px;font-size:11.5px;left:239.5px;color:#111;">1</div>
<div class="t" style="top:967.8px;line-height:16px;font-size:11.5px;left:252.5px;color:#111;">:</div>
<div class="t" style="top:968.3px;line-height:16px;font-size:11.5px;left:262.5px;color:#111;">75</div>
<svg class="a" style="left:296.5px;top:967.500px" width="17" height="16" viewBox="0 0 17 16"><rect x="1.500" y="2.500" width="15" height="11" fill="#e4e4e4" stroke="#333" stroke-width="1.200"/><path d="M2 4.500h14M2 7h14M2 9.500h14M2 12h14" stroke="#8a8a8a" stroke-width="1.200" stroke-dasharray="1.500 1.500"/><path d="M3.500 5.800h13M3.500 8.300h13M3.500 10.800h13" stroke="#8a8a8a" stroke-width="1.200" stroke-dasharray="1.500 1.500"/></svg>
<svg class="a" style="left:318.0px;top:967.500px" width="17" height="16" viewBox="0 0 17 16"><path d="M1.500 7.500l4-4h10v7l-4 4h-10z" fill="#f4f4f4" stroke="#333" stroke-width="1.200"/><path d="M1.500 7.500h10l4-4M11.500 7.500v7" fill="none" stroke="#333" stroke-width="1"/></svg>
<svg class="a" style="left:338.0px;top:967.500px" width="17" height="16" viewBox="0 0 17 16"><circle cx="7" cy="7" r="3.800" fill="#ffd43b" stroke="#d79a00"/><path d="M7 .5v2M7 11.500v2M.5 7h2M11.500 7h2M2.500 2.500l1.500 1.500M11.500 2.500l-1.500 1.500M2.500 11.500l1.500-1.500" stroke="#d79a00"/><path d="M9.500 9.500l6 6M15.500 9.500l-6 6" stroke="#d4141c" stroke-width="2"/></svg>
<svg class="a" style="left:359.5px;top:967.500px" width="17" height="16" viewBox="0 0 17 16"><circle cx="7" cy="6" r="4.500" fill="#e7f1fb" stroke="#3b82c4" stroke-width="1.200"/><path d="M2 13.500h9" stroke="#1d4f8f" stroke-width="2"/><path d="M9.500 9.500l6 6M15.500 9.500l-6 6" stroke="#d4141c" stroke-width="2"/></svg>
<svg class="a" style="left:380.5px;top:967.500px" width="17" height="16" viewBox="0 0 17 16"><path d="M4 14V5h12" fill="none" stroke="#1f6fc0" stroke-width="2.400"/><path d="M9 3.500h6" stroke="#333"/><path d="M8 12h5V8.500" fill="none" stroke="#d4141c" stroke-width="1.600"/><path d="M1 11.500h3" stroke="#333"/></svg>
<svg class="a" style="left:401.0px;top:967.500px" width="17" height="16" viewBox="0 0 17 16"><path d="M4 14V5h9" fill="none" stroke="#1f6fc0" stroke-width="2.400"/><path d="M7 11h4" stroke="#d4141c" stroke-width="1.400"/><path d="M1 11.500h3" stroke="#333"/><ellipse cx="13.500" cy="9" rx="2.800" ry="3.500" fill="#dcebfa" stroke="#1f6fc0" stroke-width="1.200"/><path d="M12.500 13.500h2v2h-2z" fill="#1f6fc0"/></svg>
<svg class="a" style="left:421.5px;top:967.500px" width="17" height="16" viewBox="0 0 17 16"><path d="M1 6c2-2 3-1 4 2c1 4 4 4 6 1c1-3 3-5 6-3" fill="none" stroke="#333" stroke-width="1.300"/><circle cx="12.500" cy="8.500" r="3.300" fill="#f4f4f4" stroke="#333" stroke-width="1.200"/><circle cx="6" cy="11" r="2.500" fill="#f4f4f4" stroke="#333" stroke-width="1.100"/></svg>
<svg class="a" style="left:442.5px;top:967.500px" width="17" height="16" viewBox="0 0 17 16"><ellipse cx="8.500" cy="7" rx="3" ry="4" fill="#cfe4fb" stroke="#1f6fc0" stroke-width="1.300"/><path d="M7.500 12h2v2.500h-2z" fill="#1f6fc0"/></svg>
<svg class="a" style="left:463.5px;top:967.500px" width="17" height="16" viewBox="0 0 17 16"><path d="M2.500 4.500h12v9h-12z" fill="none" stroke="#222" stroke-width="1.500"/><path d="M4 2.500v3M8 2.500v3M12 2.500v3M4 14v1.500M12 14v1.500" stroke="#222" stroke-width="1.300"/><rect x="9.500" y="8.500" width="6" height="5" fill="#f4f4f4" stroke="#222"/><circle cx="12.500" cy="11" r="1.200" fill="#222"/></svg>
<svg class="a" style="left:484.0px;top:967.500px" width="17" height="16" viewBox="0 0 17 16"><path d="M1.500 15V8a5 5 0 0 1 5-5h7" fill="none" stroke="#444" stroke-width="1.300"/><path d="M5 15V7M8.500 15V5M12 15V10" stroke="#444" stroke-width="1.200"/><path d="M3 15V11h6v4" fill="none" stroke="#d4141c" stroke-width="1.600"/><circle cx="13.500" cy="7" r="3.200" fill="#ffc94a" stroke="#e09200"/><path d="M12.500 11h2v2.500h-2z" fill="#888"/></svg>
<svg class="a" style="left:505.5px;top:967.500px" width="17" height="16" viewBox="0 0 17 16"><path d="M1.500 1v6M15.500 1v6M2 3.500h13" stroke="#333" stroke-width="1.100"/><path d="M1.500 8v7M2 11.500h6" stroke="#555" stroke-dasharray="2 1.500"/><rect x="9.500" y="10.500" width="6.500" height="5" fill="#888" stroke="#333"/><path d="M11 10.500V9a1.800 1.800 0 0 1 3.600 0v1.500" fill="none" stroke="#333" stroke-width="1.200"/></svg>
<svg class="a" style="left:529px;top:970.500px" width="10" height="11"><path d="M7 1.500l-4 4l4 4" fill="none" stroke="#333" stroke-width="1.800"/></svg>
<div class="a" style="left:1103px;top:969px;width:17px;height:16px;background:#cdcdcd"></div>
<svg class="a" style="left:1682px;top:971.500px" width="10" height="11"><path d="M3 1.500l4 4l-4 4" fill="none" stroke="#333" stroke-width="1.800"/></svg>
<svg class="a" style="left:1699px;top:972px" width="11" height="11"><g fill="#aaa"><rect x="8" y="2" width="2" height="2"/><rect x="5" y="5" width="2" height="2"/><rect x="8" y="5" width="2" height="2"/><rect x="2" y="8" width="2" height="2"/><rect x="5" y="8" width="2" height="2"/><rect x="8" y="8" width="2" height="2"/></g></svg>
<!-- dialog -->
<div class="a" style="left:223px;top:169px;width:287px;height:793px;background:#fbfbfb;border:1px solid #9a9a9a;box-sizing:border-box;box-shadow:1px 1px 4px rgba(80,60,120,.45)"></div>
<svg class="a" style="left:233px;top:176px" width="15" height="17"><path d="M1 3l3-2h9a1.500 1.500 0 0 1 1.500 1.500V15a1.500 1.500 0 0 1-1.500 1.500H2.500A1.500 1.500 0 0 1 1 15z" fill="#186bcc"/><path d="M1 12h13.500v3a1.500 1.500 0 0 1-1.500 1.500H2.500A1.500 1.500 0 0 1 1 15z" fill="#0c3f8a"/><text x="7.800" y="10" text-anchor="middle" font-family="Liberation Sans,sans-serif" font-weight="bold" font-size="8.500" fill="#fff">R</text></svg>
<div class="t" style="top:177.5px;line-height:16px;font-size:12.8px;left:253px;color:#9a9a9a;">DimensionView</div>
<div class="a" style="left:389px;top:184px;width:11px;height:1px;background:#888"></div>
<div class="a" style="left:434px;top:179px;width:11px;height:11px;border:1px solid #888;box-sizing:border-box"></div>
<svg class="a" style="left:479px;top:178px" width="12" height="12"><path d="M1 1l10 10M11 1l-10 10" stroke="#777" stroke-width="1"/></svg>
<div class="a" style="left:351px;top:204px;width:14px;height:14px;border:1px solid #555;background:#fff;box-sizing:border-box"></div><svg class="a" style="left:351px;top:204px" width="14" height="14" viewBox="0 0 14 14"><path d="M3 7l3 3.500l5-7.500" fill="none" stroke="#222" stroke-width="1.800"/></svg>
<div class="t" style="top:202.8px;line-height:16px;font-size:13px;left:370px;color:#111;font-weight:bold;">上</div>
<div class="a" style="left:245px;top:241px;width:14px;height:14px;border:1px solid #555;background:#fff;box-sizing:border-box"></div><svg class="a" style="left:245px;top:241px" width="14" height="14" viewBox="0 0 14 14"><path d="M3 7l3 3.500l5-7.500" fill="none" stroke="#222" stroke-width="1.800"/></svg>
<div class="t" style="top:239.8px;line-height:16px;font-size:13px;left:264px;color:#111;font-weight:bold;">左</div>
<div class="t" style="top:241.5px;line-height:16px;font-size:12px;left:366px;transform:translateX(-50%);color:#111;">选择标注边</div>
<div class="a" style="left:457px;top:241px;width:14px;height:14px;border:1px solid #555;background:#fff;box-sizing:border-box"></div><svg class="a" style="left:457px;top:241px" width="14" height="14" viewBox="0 0 14 14"><path d="M3 7l3 3.500l5-7.500" fill="none" stroke="#222" stroke-width="1.800"/></svg>
<div class="t" style="top:239.8px;line-height:16px;font-size:13px;left:476px;color:#111;font-weight:bold;">右</div>
<div class="a" style="left:351px;top:279px;width:14px;height:14px;border:1px solid #555;background:#fff;box-sizing:border-box"></div><svg class="a" style="left:351px;top:279px" width="14" height="14" viewBox="0 0 14 14"><path d="M3 7l3 3.500l5-7.500" fill="none" stroke="#222" stroke-width="1.800"/></svg>
<div class="t" style="top:277.8px;line-height:16px;font-size:13px;left:370px;color:#111;font-weight:bold;">下</div>
<div class="a" style="left:224px;top:299px;width:285px;height:1px;background:#66767f"></div>
<div class="a" style="left:224px;top:300px;width:285px;height:661px;background:#fafafa"></div>
<div class="a" style="left:491px;top:300px;width:18px;height:645px;background:#f1eff3"></div>
<div class="a" style="left:491px;top:319px;width:18px;height:489px;background:#c9c9c9"></div>
<svg class="a" style="left:494px;top:305px" width="12" height="10"><path d="M2 7l4-4l4 4" fill="none" stroke="#999" stroke-width="1.200"/></svg>
<svg class="a" style="left:494px;top:932px" width="12" height="10"><path d="M2 3l4 4l4-4" fill="none" stroke="#999" stroke-width="1.200"/></svg>
<div class="a" style="left:225px;top:307px;width:266px;height:332px;background:#f1eff4;border-top:1px solid #d0d0d0;border-bottom:1px solid #d0d0d0;border-radius:3px"></div>
<svg class="a" style="left:230.5px;top:313.5px" width="20" height="20"><circle cx="10" cy="10" r="9" fill="#fff" stroke="#222" stroke-width="1.200"/><path d="M6 12l4-4l4 4" fill="none" stroke="#222" stroke-width="1.800"/></svg>
<div class="t" style="top:316.5px;line-height:16px;font-size:12px;left:254px;color:#111;">尺寸标注</div>
<div class="a" style="left:235px;top:349px;width:256px;height:24px;border:1px solid #b5b5b5;box-sizing:border-box;background:#e9e7ec"></div><div class="t" style="top:354.5px;line-height:16px;font-size:12.5px;left:240px;color:#111;">A2尺寸标注 内部</div><svg class="a" style="left:477px;top:356.0px" width="10" height="10"><path d="M2 3l3 3l3-3" fill="none" stroke="#444" stroke-width="1.200"/></svg>
<div class="t" style="top:387.5px;line-height:16px;font-size:12px;left:233px;color:#111;">忽略小于</div>
<div class="a" style="left:287px;top:387px;width:49px;height:17px;border:1px solid #dcdcdc;border-radius:5px;box-sizing:border-box;background:#f5f3f7"></div><div class="t" style="top:387.7px;line-height:16px;font-size:13px;left:311.5px;transform:translateX(-50%);color:#111;">20</div>
<div class="t" style="top:387.5px;line-height:16px;font-size:12px;left:341px;color:#111;">的尺寸标注</div>
<div class="t" style="top:420.5px;line-height:16px;font-size:12px;left:233px;color:#111;">标注偏移:</div>
<div class="a" style="left:302px;top:420px;width:49px;height:17px;border:1px solid #dcdcdc;border-radius:5px;box-sizing:border-box;background:#f5f3f7"></div><div class="t" style="top:420.7px;line-height:16px;font-size:13px;left:326.5px;transform:translateX(-50%);color:#111;">10</div>
<div class="a" style="left:361px;top:421px;width:14px;height:14px;border:1px solid #555;background:#fff;box-sizing:border-box"></div>
<div class="t" style="top:420.5px;line-height:16px;font-size:12px;left:380px;color:#111;">标注增强</div>
<div class="a" style="left:234px;top:449px;width:80px;height:21.5px;background:#8c66a6;border-radius:6px;"></div><div class="t" style="top:451.4px;line-height:18px;font-size:14.5px;left:274.0px;transform:translateX(-50%);color:#fff;font-weight:bold;">平面标注</div>
<div class="a" style="left:323px;top:449px;width:80px;height:21.5px;background:#8c66a6;border-radius:6px;"></div><div class="t" style="top:451.4px;line-height:18px;font-size:14.5px;left:363.0px;transform:translateX(-50%);color:#fff;font-weight:bold;">立面标注</div>
<div class="a" style="left:411px;top:449px;width:80px;height:21.5px;background:#8c66a6;border-radius:6px;"></div><div class="t" style="top:451.4px;line-height:18px;font-size:14.5px;left:451.0px;transform:translateX(-50%);color:#fff;font-weight:bold;">剖面标注</div>
<div class="a" style="left:235px;top:480px;width:256px;height:1px;background:#6a6a6a"></div>
<div class="a" style="left:236px;top:493px;width:121px;height:21.5px;background:#8c66a6;border-radius:6px;"></div><div class="t" style="top:495.4px;line-height:18px;font-size:14.5px;left:296.5px;transform:translateX(-50%);color:#fff;font-weight:bold;">标注草图线</div>
<div class="a" style="left:369px;top:493px;width:121px;height:21.5px;background:#8c66a6;border-radius:6px;"></div><div class="t" style="top:495.4px;line-height:18px;font-size:14.5px;left:429.5px;transform:translateX(-50%);color:#fff;font-weight:bold;">草图快标</div>
<svg class="a" style="left:235px;top:520px" width="14" height="14"><circle cx="7" cy="7" r="5.700" fill="#fff" stroke="#555" stroke-width="1"/><circle cx="7" cy="7" r="3" fill="#222"/></svg>
<div class="t" style="top:520.5px;line-height:16px;font-size:12px;left:254px;color:#111;">一道</div>
<svg class="a" style="left:288px;top:520px" width="14" height="14"><circle cx="7" cy="7" r="5.700" fill="#fff" stroke="#555" stroke-width="1"/></svg>
<div class="t" style="top:520.5px;line-height:16px;font-size:12px;left:307px;color:#111;">两道</div>
<svg class="a" style="left:341px;top:520px" width="14" height="14"><circle cx="7" cy="7" r="5.700" fill="#fff" stroke="#555" stroke-width="1"/></svg>
<div class="t" style="top:520.5px;line-height:16px;font-size:12px;left:360px;color:#111;">三道</div>
<div class="a" style="left:235px;top:540px;width:256px;height:1px;background:#6a6a6a"></div>
<div class="t" style="top:554.0px;line-height:16px;font-size:12px;left:289px;color:#111;">标注偏移系数:</div>
<div class="a" style="left:382px;top:552px;width:50px;height:17px;border:1px solid #dcdcdc;border-radius:5px;box-sizing:border-box;background:#f5f3f7"></div><div class="t" style="top:552.7px;line-height:16px;font-size:13px;left:407.0px;transform:translateX(-50%);color:#111;">1.3</div>
<div class="a" style="left:233px;top:578px;width:141px;height:22.5px;background:#5a2a9e;border-radius:6px;"></div><div class="t" style="top:581.0px;line-height:18px;font-size:14.5px;left:303.5px;transform:translateX(-50%);color:#fff;font-weight:bold;">完成面尺寸</div>
<div class="a" style="left:398px;top:582px;width:14px;height:14px;border:1px solid #555;background:#fff;box-sizing:border-box"></div>
<div class="t" style="top:582.0px;line-height:16px;font-size:12px;left:417px;color:#111;">是否标洞口</div>
<div class="a" style="left:234px;top:608px;width:90px;height:22px;background:#8c66a6;border-radius:6px;"></div><div class="t" style="top:610.7px;line-height:18px;font-size:14.5px;left:279.0px;transform:translateX(-50%);color:#fff;font-weight:bold;">拆改图标注</div>
<div class="a" style="left:332px;top:608px;width:76px;height:22px;background:#8c66a6;border-radius:6px;"></div><div class="t" style="top:610.7px;line-height:18px;font-size:14.5px;left:370.0px;transform:translateX(-50%);color:#fff;font-weight:bold;">灯具定位</div>
<div class="a" style="left:416px;top:608px;width:75px;height:22px;background:#8c66a6;border-radius:6px;"></div><div class="t" style="top:610.7px;line-height:18px;font-size:14.5px;left:453.5px;transform:translateX(-50%);color:#fff;font-weight:bold;">开关插座</div>
<div class="a" style="left:224px;top:640px;width:267px;height:16px;background:#fbfbfb"></div>
<div class="a" style="left:224px;top:647px;width:267px;height:1px;background:#66767f"></div>
<div class="a" style="left:225px;top:656px;width:266px;height:289px;background:#f1eff4;border-top:1px solid #d0d0d0;border-radius:3px 3px 0 0"></div>
<svg class="a" style="left:230.5px;top:662.5px" width="20" height="20"><circle cx="10" cy="10" r="9" fill="#fff" stroke="#222" stroke-width="1.200"/><path d="M6 12l4-4l4 4" fill="none" stroke="#222" stroke-width="1.800"/></svg>
<div class="t" style="top:665.5px;line-height:16px;font-size:12px;left:254px;color:#111;">材质标高</div>
<div class="t" style="top:694.0px;line-height:16px;font-size:12px;left:363px;transform:translateX(-50%);color:#111;">公共标签样式选择</div>
<div class="t" style="top:717.0px;line-height:16px;font-size:12px;left:246px;color:#111;">标注样式</div>
<div class="a" style="left:313px;top:712px;width:180px;height:23.5px;border:1px solid #b5b5b5;box-sizing:border-box;background:#e9e7ec"></div><div class="t" style="top:717.2px;line-height:16px;font-size:12.5px;left:318px;color:#111;">小鲶鱼主材索引-Catfish</div><svg class="a" style="left:479px;top:718.75px" width="10" height="10"><path d="M2 3l3 3l3-3" fill="none" stroke="#444" stroke-width="1.200"/></svg>
<div class="t" style="top:746.5px;line-height:16px;font-size:12px;left:246px;color:#111;">标高类型</div>
<div class="a" style="left:313px;top:741.5px;width:180px;height:23.5px;border:1px solid #b5b5b5;box-sizing:border-box;background:#e9e7ec"></div><div class="t" style="top:746.8px;line-height:16px;font-size:12.5px;left:318px;color:#111;">顶面标高A2</div><svg class="a" style="left:479px;top:748.25px" width="10" height="10"><path d="M2 3l3 3l3-3" fill="none" stroke="#444" stroke-width="1.200"/></svg>
<div class="a" style="left:491px;top:700px;width:18px;height:70px;background:#c9c9c9"></div>
<div class="t" style="top:778.0px;line-height:16px;font-size:12px;left:233px;color:#111;">偏移</div>
<div class="a" style="left:263px;top:777px;width:38.5px;height:16.5px;border:1px solid #dcdcdc;border-radius:5px;box-sizing:border-box;background:#f5f3f7"></div><div class="t" style="top:777.5px;line-height:16px;font-size:13px;left:282.25px;transform:translateX(-50%);color:#111;">45</div>
<div class="t" style="top:778.0px;line-height:16px;font-size:12px;left:307px;color:#111;">左右</div>
<div class="a" style="left:337px;top:777px;width:38.5px;height:16.5px;border:1px solid #dcdcdc;border-radius:5px;box-sizing:border-box;background:#f5f3f7"></div><div class="t" style="top:777.5px;line-height:16px;font-size:13px;left:356.25px;transform:translateX(-50%);color:#111;">2</div>
<div class="a" style="left:382px;top:778px;width:14px;height:14px;border:1px solid #555;background:#fff;box-sizing:border-box"></div>
<div class="t" style="top:778.0px;line-height:16px;font-size:12px;left:401px;color:#111;">切换版本</div>
<div class="a" style="left:235px;top:807px;width:256px;height:1px;background:#6a6a6a"></div>
<div class="t" style="top:815.0px;line-height:16px;font-size:12px;left:363px;transform:translateX(-50%);color:#111;">常规材质标记</div>
<div class="a" style="left:234px;top:833px;width:125px;height:22px;background:#8c66a6;border-radius:6px;"></div><div class="t" style="top:835.7px;line-height:18px;font-size:14.5px;left:296.5px;transform:translateX(-50%);color:#fff;font-weight:bold;">一键材质标注</div>
<div class="a" style="left:367px;top:833px;width:124px;height:22px;background:#8c66a6;border-radius:6px;"></div><div class="t" style="top:835.7px;line-height:18px;font-size:14.5px;left:429.0px;transform:translateX(-50%);color:#fff;font-weight:bold;">手动材质标注</div>
<div class="a" style="left:235px;top:864px;width:256px;height:1px;background:#6a6a6a"></div>
<div class="t" style="top:872.5px;line-height:16px;font-size:12px;left:360px;transform:translateX(-50%);color:#111;">天花材质标签（含标高）</div>
<div class="t" style="top:896.0px;line-height:16px;font-size:12px;left:233px;color:#111;">标高X偏移</div>
<div class="a" style="left:294px;top:894px;width:49.5px;height:17px;border:1px solid #dcdcdc;border-radius:5px;box-sizing:border-box;background:#f5f3f7"></div><div class="t" style="top:894.7px;line-height:16px;font-size:13px;left:318.75px;transform:translateX(-50%);color:#111;">1.5</div>
<div class="t" style="top:896.0px;line-height:16px;font-size:12px;left:349px;color:#111;">标高Y偏移</div>
<div class="a" style="left:409px;top:894px;width:49.5px;height:17px;border:1px solid #dcdcdc;border-radius:5px;box-sizing:border-box;background:#f5f3f7"></div><div class="t" style="top:894.7px;line-height:16px;font-size:13px;left:433.75px;transform:translateX(-50%);color:#111;">1.8</div>
<div class="t" style="top:928.0px;line-height:16px;font-size:12px;left:233px;color:#111;">有玻璃斜窗要选地面标高</div>
<div class="a" style="left:371px;top:922px;width:40px;height:24px;border:1px solid #b5b5b5;box-sizing:border-box;background:#e9e7ec"></div><div class="t" style="top:927.5px;line-height:16px;font-size:12.5px;left:376px;color:#111;">F1</div><svg class="a" style="left:397px;top:929.0px" width="10" height="10"><path d="M2 3l3 3l3-3" fill="none" stroke="#444" stroke-width="1.200"/></svg>
<div class="a" style="left:224px;top:945px;width:285px;height:16px;background:#f1eff3"></div>
<div class="a" style="left:245px;top:945px;width:216px;height:16px;background:#cdcdcd"></div>
<svg class="a" style="left:228px;top:947px" width="10" height="12"><path d="M7 2l-4 4l4 4" fill="none" stroke="#999" stroke-width="1.200"/></svg>
<svg class="a" style="left:478px;top:947px" width="10" height="12"><path d="M3 2l4 4l-4 4" fill="none" stroke="#999" stroke-width="1.200"/></svg>
<svg class="a" style="left:239px;top:590px" width="22" height="24" viewBox="0 0 22 24"><path d="M6.500 13V3.500a1.700 1.700 0 0 1 3.400 0V10l1-.2a1.600 1.600 0 0 1 2.600.8l.6-.1a1.600 1.600 0 0 1 2.400 1l.5 0a1.500 1.500 0 0 1 1.500 1.500V17c0 3-2 6-5 6h-3.500c-2 0-3.500-1-4.500-2.500L1.500 15a1.600 1.600 0 0 1 2.600-1.800z" fill="#fff" stroke="#111" stroke-width="1.200" stroke-linejoin="round"/><path d="M10 10v5M13 11v4M15.700 12v3.500" stroke="#111" stroke-width="1"/></svg>
<!-- browser -->
<div class="a" style="left:1717px;top:143px;width:127px;height:844px;background:#fcfcfc"></div>
<div class="a" style="left:1717px;top:143px;width:127px;height:21px;background:#f1f0f3"></div>
<div class="t" style="top:146.5px;line-height:16px;font-size:12px;left:1721px;color:#222;">项目浏览器 - 演示讲解文件</div>
<div class="a" style="left:1727px;top:180px;width:0px;height:790px;border-left:1px dotted #aaa"></div>
<div class="a" style="left:1747px;top:182px;width:0px;height:790px;border-left:1px dotted #aaa"></div>
<div class="a" style="left:1767px;top:204px;width:0px;height:150px;border-left:1px dotted #aaa"></div>
<div class="a" style="left:1767px;top:384px;width:0px;height:90px;border-left:1px dotted #aaa"></div>
<div class="a" style="left:1767px;top:504px;width:0px;height:230px;border-left:1px dotted #aaa"></div>
<div class="a" style="left:1767px;top:764px;width:0px;height:110px;border-left:1px dotted #aaa"></div>
<div class="a" style="left:1767px;top:924px;width:0px;height:50px;border-left:1px dotted #aaa"></div>
<svg class="a" style="left:1723px;top:169px" width="10" height="10"><rect x=".5" y=".5" width="9" height="9" rx="1.500" fill="#fff" stroke="#9a9a9a"/><path d="M2.500 5h5" stroke="#3b4fa0" stroke-width="1.200"/></svg>
<div class="a" style="left:1733px;top:174px;width:6px;height:0px;border-top:1px dotted #aaa"></div>
<svg class="a" style="left:1740px;top:167px" width="14" height="14"><path d="M1 4V1h3M10 1h3v3M13 10v3h-3M4 13H1v-3" fill="none" stroke="#333" stroke-width="1.200"/><path d="M4.500 5.500l1-1.500h4.500v4.500l-1 1.500h-4.500z" fill="none" stroke="#333" stroke-width="1"/></svg>
<div class="t" style="top:167.0px;line-height:16px;font-size:12px;left:1761px;color:#111;">视图 (全部)</div>
<svg class="a" style="left:1743px;top:189px" width="10" height="10"><rect x=".5" y=".5" width="9" height="9" rx="1.500" fill="#fff" stroke="#9a9a9a"/><path d="M2.500 5h5" stroke="#3b4fa0" stroke-width="1.200"/></svg>
<div class="a" style="left:1753px;top:194px;width:9px;height:0px;border-top:1px dotted #aaa"></div>
<div class="t" style="top:187.0px;line-height:16px;font-size:12px;left:1765px;color:#111;">楼层平面</div>
<div class="a" style="left:1767px;top:214px;width:12px;height:0px;border-top:1px dotted #aaa"></div>
<svg class="a" style="left:1779px;top:204px" width="16" height="16"><rect x=".5" y=".5" width="15" height="15" fill="none" stroke="#444" stroke-dasharray="2.500 1.200"/><rect x="2.700" y="2.700" width="10.600" height="10.600" fill="#f6f4f8" stroke="#555" stroke-width="1.300"/></svg>
<div class="t" style="top:207.0px;line-height:16px;font-size:12px;left:1801px;color:#111;">F1</div>
<div class="a" style="left:1767px;top:234px;width:12px;height:0px;border-top:1px dotted #aaa"></div>
<svg class="a" style="left:1779px;top:224px" width="16" height="16"><rect x=".5" y=".5" width="15" height="15" fill="none" stroke="#444" stroke-dasharray="2.500 1.200"/><rect x="2.700" y="2.700" width="10.600" height="10.600" fill="#f6f4f8" stroke="#555" stroke-width="1.300"/></svg>
<div class="t" style="top:227.0px;line-height:16px;font-size:12px;left:1801px;color:#111;">F1地面铺装图</div>
<div class="a" style="left:1767px;top:254px;width:12px;height:0px;border-top:1px dotted #aaa"></div>
<svg class="a" style="left:1779px;top:244px" width="16" height="16"><rect x=".5" y=".5" width="15" height="15" fill="none" stroke="#444" stroke-dasharray="2.500 1.200"/><rect x="2.700" y="2.700" width="10.600" height="10.600" fill="#f6f4f8" stroke="#555" stroke-width="1.300"/></svg>
<div class="t" style="top:247.0px;line-height:16px;font-size:12px;left:1801px;color:#111;">F1完成面尺寸</div>
<div class="a" style="left:1767px;top:274px;width:12px;height:0px;border-top:1px dotted #aaa"></div>
<svg class="a" style="left:1779px;top:264px" width="16" height="16"><rect x=".5" y=".5" width="15" height="15" fill="none" stroke="#444" stroke-dasharray="2.500 1.200"/><rect x="2.700" y="2.700" width="10.600" height="10.600" fill="#f6f4f8" stroke="#555" stroke-width="1.300"/></svg>
<div class="t" style="top:267.0px;line-height:16px;font-size:12px;left:1801px;color:#111;">F1平面布置图</div>
<div class="a" style="left:1767px;top:294px;width:12px;height:0px;border-top:1px dotted #aaa"></div>
<svg class="a" style="left:1779px;top:284px" width="16" height="16"><rect x=".5" y=".5" width="15" height="15" fill="none" stroke="#444" stroke-dasharray="2.500 1.200"/><rect x="2.700" y="2.700" width="10.600" height="10.600" fill="#f6f4f8" stroke="#555" stroke-width="1.300"/></svg>
<div class="a" style="left:1798px;top:284px;width:46px;height:19px;background:#e6e4ea"></div>
<div class="t" style="top:287.0px;line-height:16px;font-size:12px;left:1801px;color:#000;font-weight:bold;">F1拆改图</div>
<div class="a" style="left:1767px;top:314px;width:12px;height:0px;border-top:1px dotted #aaa"></div>
<svg class="a" style="left:1779px;top:304px" width="16" height="16"><rect x=".5" y=".5" width="15" height="15" fill="none" stroke="#444" stroke-dasharray="2.500 1.200"/><rect x="2.700" y="2.700" width="10.600" height="10.600" fill="#f6f4f8" stroke="#555" stroke-width="1.300"/></svg>
<div class="t" style="top:307.0px;line-height:16px;font-size:12px;left:1801px;color:#111;">F1点位布置图</div>
<div class="a" style="left:1767px;top:334px;width:12px;height:0px;border-top:1px dotted #aaa"></div>
<svg class="a" style="left:1779px;top:324px" width="16" height="16"><rect x=".5" y=".5" width="15" height="15" fill="none" stroke="#444" stroke-dasharray="2.500 1.200"/><rect x="2.700" y="2.700" width="10.600" height="10.600" fill="#f6f4f8" stroke="#555" stroke-width="1.300"/></svg>
<div class="t" style="top:327.0px;line-height:16px;font-size:12px;left:1801px;color:#111;">F1立面索引图</div>
<div class="a" style="left:1767px;top:354px;width:12px;height:0px;border-top:1px dotted #aaa"></div>
<svg class="a" style="left:1779px;top:344px" width="16" height="16"><rect x=".5" y=".5" width="15" height="15" fill="none" stroke="#444" stroke-dasharray="2.500 1.200"/><rect x="2.700" y="2.700" width="10.600" height="10.600" fill="#f6f4f8" stroke="#555" stroke-width="1.300"/></svg>
<div class="t" style="top:347.0px;line-height:16px;font-size:12px;left:1801px;color:#111;">F2</div>
<svg class="a" style="left:1743px;top:369px" width="10" height="10"><rect x=".5" y=".5" width="9" height="9" rx="1.500" fill="#fff" stroke="#9a9a9a"/><path d="M2.500 5h5" stroke="#3b4fa0" stroke-width="1.200"/></svg>
<div class="a" style="left:1753px;top:374px;width:9px;height:0px;border-top:1px dotted #aaa"></div>
<div class="t" style="top:367.0px;line-height:16px;font-size:12px;left:1765px;color:#111;">天花板平面</div>
<div class="a" style="left:1767px;top:394px;width:12px;height:0px;border-top:1px dotted #aaa"></div>
<svg class="a" style="left:1779px;top:384px" width="16" height="16"><rect x=".5" y=".5" width="15" height="15" fill="none" stroke="#444" stroke-dasharray="2.500 1.200"/><rect x="2.700" y="2.700" width="10.600" height="10.600" fill="#f6f4f8" stroke="#555" stroke-width="1.300"/></svg>
<div class="t" style="top:387.0px;line-height:16px;font-size:12px;left:1801px;color:#111;">F1</div>
<div class="a" style="left:1767px;top:414px;width:12px;height:0px;border-top:1px dotted #aaa"></div>
<svg class="a" style="left:1779px;top:404px" width="16" height="16"><rect x=".5" y=".5" width="15" height="15" fill="none" stroke="#444" stroke-dasharray="2.500 1.200"/><rect x="2.700" y="2.700" width="10.600" height="10.600" fill="#f6f4f8" stroke="#555" stroke-width="1.300"/></svg>
<div class="t" style="top:407.0px;line-height:16px;font-size:12px;left:1801px;color:#111;">F1天花布置图</div>
<div class="a" style="left:1767px;top:434px;width:12px;height:0px;border-top:1px dotted #aaa"></div>
<svg class="a" style="left:1779px;top:424px" width="16" height="16"><rect x=".5" y=".5" width="15" height="15" fill="none" stroke="#444" stroke-dasharray="2.500 1.200"/><rect x="2.700" y="2.700" width="10.600" height="10.600" fill="#f6f4f8" stroke="#555" stroke-width="1.300"/></svg>
<div class="t" style="top:427.0px;line-height:16px;font-size:12px;left:1801px;color:#111;">F1灯具定位图</div>
<div class="a" style="left:1767px;top:454px;width:12px;height:0px;border-top:1px dotted #aaa"></div>
<svg class="a" style="left:1779px;top:444px" width="16" height="16"><rect x=".5" y=".5" width="15" height="15" fill="none" stroke="#444" stroke-dasharray="2.500 1.200"/><rect x="2.700" y="2.700" width="10.600" height="10.600" fill="#f6f4f8" stroke="#555" stroke-width="1.300"/></svg>
<div class="t" style="top:447.0px;line-height:16px;font-size:12px;left:1801px;color:#111;">F1灯控图</div>
<div class="a" style="left:1767px;top:474px;width:12px;height:0px;border-top:1px dotted #aaa"></div>
<svg class="a" style="left:1779px;top:464px" width="16" height="16"><rect x=".5" y=".5" width="15" height="15" fill="none" stroke="#444" stroke-dasharray="2.500 1.200"/><rect x="2.700" y="2.700" width="10.600" height="10.600" fill="#f6f4f8" stroke="#555" stroke-width="1.300"/></svg>
<div class="t" style="top:467.0px;line-height:16px;font-size:12px;left:1801px;color:#111;">F2</div>
<svg class="a" style="left:1743px;top:489px" width="10" height="10"><rect x=".5" y=".5" width="9" height="9" rx="1.500" fill="#fff" stroke="#9a9a9a"/><path d="M2.500 5h5" stroke="#3b4fa0" stroke-width="1.200"/></svg>
<div class="a" style="left:1753px;top:494px;width:9px;height:0px;border-top:1px dotted #aaa"></div>
<div class="t" style="top:487.0px;line-height:16px;font-size:12px;left:1765px;color:#111;">三维视图</div>
<div class="a" style="left:1767px;top:514px;width:12px;height:0px;border-top:1px dotted #aaa"></div>
<svg class="a" style="left:1779px;top:504px" width="16" height="16"><rect x=".5" y=".5" width="15" height="15" fill="none" stroke="#444" stroke-dasharray="2.500 1.200"/><rect x="2.700" y="2.700" width="10.600" height="10.600" fill="#f6f4f8" stroke="#555" stroke-width="1.300"/></svg>
<div class="t" style="top:507.0px;line-height:16px;font-size:12px;left:1801px;color:#111;">Enscape View 1</div>
<div class="a" style="left:1767px;top:534px;width:12px;height:0px;border-top:1px dotted #aaa"></div>
<svg class="a" style="left:1779px;top:524px" width="16" height="16"><rect x=".5" y=".5" width="15" height="15" fill="none" stroke="#444" stroke-dasharray="2.500 1.200"/><rect x="2.700" y="2.700" width="10.600" height="10.600" fill="#f6f4f8" stroke="#555" stroke-width="1.300"/></svg>
<div class="t" style="top:527.0px;line-height:16px;font-size:12px;left:1801px;color:#111;">Enscape View 2</div>
<div class="a" style="left:1767px;top:554px;width:12px;height:0px;border-top:1px dotted #aaa"></div>
<svg class="a" style="left:1779px;top:544px" width="16" height="16"><rect x=".5" y=".5" width="15" height="15" fill="none" stroke="#444" stroke-dasharray="2.500 1.200"/><rect x="2.700" y="2.700" width="10.600" height="10.600" fill="#f6f4f8" stroke="#555" stroke-width="1.300"/></svg>
<div class="t" style="top:547.0px;line-height:16px;font-size:12px;left:1801px;color:#111;">Enscape View 3</div>
<div class="a" style="left:1767px;top:574px;width:12px;height:0px;border-top:1px dotted #aaa"></div>
<svg class="a" style="left:1779px;top:564px" width="16" height="16"><rect x=".5" y=".5" width="15" height="15" fill="none" stroke="#444" stroke-dasharray="2.500 1.200"/><rect x="2.700" y="2.700" width="10.600" height="10.600" fill="#f6f4f8" stroke="#555" stroke-width="1.300"/></svg>
<div class="t" style="top:567.0px;line-height:16px;font-size:12px;left:1801px;color:#111;">Enscape View 4</div>
<div class="a" style="left:1767px;top:594px;width:12px;height:0px;border-top:1px dotted #aaa"></div>
<svg class="a" style="left:1779px;top:584px" width="16" height="16"><rect x=".5" y=".5" width="15" height="15" fill="none" stroke="#444" stroke-dasharray="2.500 1.200"/><rect x="2.700" y="2.700" width="10.600" height="10.600" fill="#f6f4f8" stroke="#555" stroke-width="1.300"/></svg>
<div class="t" style="top:587.0px;line-height:16px;font-size:12px;left:1801px;color:#111;">Enscape View 5</div>
<div class="a" style="left:1767px;top:614px;width:12px;height:0px;border-top:1px dotted #aaa"></div>
<svg class="a" style="left:1779px;top:604px" width="16" height="16"><rect x=".5" y=".5" width="15" height="15" fill="none" stroke="#444" stroke-dasharray="2.500 1.200"/><rect x="2.700" y="2.700" width="10.600" height="10.600" fill="#f6f4f8" stroke="#555" stroke-width="1.300"/></svg>
<div class="t" style="top:607.0px;line-height:16px;font-size:12px;left:1801px;color:#111;">Enscape View 6</div>
<div class="a" style="left:1767px;top:634px;width:12px;height:0px;border-top:1px dotted #aaa"></div>
<svg class="a" style="left:1779px;top:624px" width="16" height="16"><rect x=".5" y=".5" width="15" height="15" fill="none" stroke="#444" stroke-dasharray="2.500 1.200"/><rect x="2.700" y="2.700" width="10.600" height="10.600" fill="#f6f4f8" stroke="#555" stroke-width="1.300"/></svg>
<div class="t" style="top:627.0px;line-height:16px;font-size:12px;left:1801px;color:#111;">Synced View</div>
<div class="a" style="left:1767px;top:654px;width:12px;height:0px;border-top:1px dotted #aaa"></div>
<svg class="a" style="left:1779px;top:644px" width="16" height="16"><rect x=".5" y=".5" width="15" height="15" fill="none" stroke="#444" stroke-dasharray="2.500 1.200"/><rect x="2.700" y="2.700" width="10.600" height="10.600" fill="#f6f4f8" stroke="#555" stroke-width="1.300"/></svg>
<div class="t" style="top:647.0px;line-height:16px;font-size:12px;left:1801px;color:#111;">{三维}</div>
<div class="a" style="left:1767px;top:674px;width:12px;height:0px;border-top:1px dotted #aaa"></div>
<svg class="a" style="left:1779px;top:664px" width="16" height="16"><rect x=".5" y=".5" width="15" height="15" fill="none" stroke="#444" stroke-dasharray="2.500 1.200"/><rect x="2.700" y="2.700" width="10.600" height="10.600" fill="#f6f4f8" stroke="#555" stroke-width="1.300"/></svg>
<div class="t" style="top:667.0px;line-height:16px;font-size:12px;left:1801px;color:#111;">{三维}1</div>
<div class="a" style="left:1767px;top:694px;width:12px;height:0px;border-top:1px dotted #aaa"></div>
<svg class="a" style="left:1779px;top:684px" width="16" height="16"><rect x=".5" y=".5" width="15" height="15" fill="none" stroke="#444" stroke-dasharray="2.500 1.200"/><rect x="2.700" y="2.700" width="10.600" height="10.600" fill="#f6f4f8" stroke="#555" stroke-width="1.300"/></svg>
<div class="t" style="top:687.0px;line-height:16px;font-size:12px;left:1801px;color:#111;">{三维}2</div>
<div class="a" style="left:1767px;top:714px;width:12px;height:0px;border-top:1px dotted #aaa"></div>
<svg class="a" style="left:1779px;top:704px" width="16" height="16"><rect x=".5" y=".5" width="15" height="15" fill="none" stroke="#444" stroke-dasharray="2.500 1.200"/><rect x="2.700" y="2.700" width="10.600" height="10.600" fill="#f6f4f8" stroke="#555" stroke-width="1.300"/></svg>
<div class="t" style="top:707.0px;line-height:16px;font-size:12px;left:1801px;color:#111;">{三维}3</div>
<div class="a" style="left:1767px;top:734px;width:12px;height:0px;border-top:1px dotted #aaa"></div>
<svg class="a" style="left:1779px;top:724px" width="16" height="16"><rect x=".5" y=".5" width="15" height="15" fill="none" stroke="#444" stroke-dasharray="2.500 1.200"/><rect x="2.700" y="2.700" width="10.600" height="10.600" fill="#f6f4f8" stroke="#555" stroke-width="1.300"/></svg>
<div class="t" style="top:727.0px;line-height:16px;font-size:12px;left:1801px;color:#111;">轻量化视图</div>
<svg class="a" style="left:1743px;top:749px" width="10" height="10"><rect x=".5" y=".5" width="9" height="9" rx="1.500" fill="#fff" stroke="#9a9a9a"/><path d="M2.500 5h5" stroke="#3b4fa0" stroke-width="1.200"/></svg>
<div class="a" style="left:1753px;top:754px;width:9px;height:0px;border-top:1px dotted #aaa"></div>
<div class="t" style="top:747.0px;line-height:16px;font-size:12px;left:1765px;color:#111;">立面 (单头立面)</div>
<div class="a" style="left:1767px;top:774px;width:12px;height:0px;border-top:1px dotted #aaa"></div>
<svg class="a" style="left:1779px;top:764px" width="16" height="16"><rect x=".5" y=".5" width="15" height="15" fill="none" stroke="#444" stroke-dasharray="2.500 1.200"/><rect x="2.700" y="2.700" width="10.600" height="10.600" fill="#f6f4f8" stroke="#555" stroke-width="1.300"/></svg>
<div class="t" style="top:767.0px;line-height:16px;font-size:12px;left:1801px;color:#111;">01</div>
<div class="a" style="left:1767px;top:794px;width:12px;height:0px;border-top:1px dotted #aaa"></div>
<svg class="a" style="left:1779px;top:784px" width="16" height="16"><rect x=".5" y=".5" width="15" height="15" fill="none" stroke="#444" stroke-dasharray="2.500 1.200"/><rect x="2.700" y="2.700" width="10.600" height="10.600" fill="#f6f4f8" stroke="#555" stroke-width="1.300"/></svg>
<div class="t" style="top:787.0px;line-height:16px;font-size:12px;left:1801px;color:#111;">02</div>
<div class="a" style="left:1767px;top:814px;width:12px;height:0px;border-top:1px dotted #aaa"></div>
<svg class="a" style="left:1779px;top:804px" width="16" height="16"><rect x=".5" y=".5" width="15" height="15" fill="none" stroke="#444" stroke-dasharray="2.500 1.200"/><rect x="2.700" y="2.700" width="10.600" height="10.600" fill="#f6f4f8" stroke="#555" stroke-width="1.300"/></svg>
<div class="t" style="top:807.0px;line-height:16px;font-size:12px;left:1801px;color:#111;">立面 4 - a</div>
<div class="a" style="left:1767px;top:834px;width:12px;height:0px;border-top:1px dotted #aaa"></div>
<svg class="a" style="left:1779px;top:824px" width="16" height="16"><rect x=".5" y=".5" width="15" height="15" fill="none" stroke="#444" stroke-dasharray="2.500 1.200"/><rect x="2.700" y="2.700" width="10.600" height="10.600" fill="#f6f4f8" stroke="#555" stroke-width="1.300"/></svg>
<div class="t" style="top:827.0px;line-height:16px;font-size:12px;left:1801px;color:#111;">立面 5 - a</div>
<div class="a" style="left:1767px;top:854px;width:12px;height:0px;border-top:1px dotted #aaa"></div>
<svg class="a" style="left:1779px;top:844px" width="16" height="16"><rect x=".5" y=".5" width="15" height="15" fill="none" stroke="#444" stroke-dasharray="2.500 1.200"/><rect x="2.700" y="2.700" width="10.600" height="10.600" fill="#f6f4f8" stroke="#555" stroke-width="1.300"/></svg>
<div class="t" style="top:847.0px;line-height:16px;font-size:12px;left:1801px;color:#111;">立面 6 - a</div>
<div class="a" style="left:1767px;top:874px;width:12px;height:0px;border-top:1px dotted #aaa"></div>
<svg class="a" style="left:1779px;top:864px" width="16" height="16"><rect x=".5" y=".5" width="15" height="15" fill="none" stroke="#444" stroke-dasharray="2.500 1.200"/><rect x="2.700" y="2.700" width="10.600" height="10.600" fill="#f6f4f8" stroke="#555" stroke-width="1.300"/></svg>
<div class="t" style="top:867.0px;line-height:16px;font-size:12px;left:1801px;color:#111;">立面 7 - a</div>
<svg class="a" style="left:1743px;top:889px" width="10" height="10"><rect x=".5" y=".5" width="9" height="9" rx="1.500" fill="#fff" stroke="#9a9a9a"/><path d="M2.500 5h5" stroke="#3b4fa0" stroke-width="1.200"/><path d="M5 2.500v5" stroke="#3b4fa0" stroke-width="1.200"/></svg>
<div class="a" style="left:1753px;top:894px;width:9px;height:0px;border-top:1px dotted #aaa"></div>
<div class="t" style="top:887.0px;line-height:16px;font-size:12px;left:1765px;color:#111;">剖面 (室内剖面)</div>
<svg class="a" style="left:1743px;top:909px" width="10" height="10"><rect x=".5" y=".5" width="9" height="9" rx="1.500" fill="#fff" stroke="#9a9a9a"/><path d="M2.500 5h5" stroke="#3b4fa0" stroke-width="1.200"/></svg>
<div class="a" style="left:1753px;top:914px;width:9px;height:0px;border-top:1px dotted #aaa"></div>
<div class="t" style="top:907.0px;line-height:16px;font-size:12px;left:1765px;color:#111;">绘图视图 (详图)</div>
<div class="a" style="left:1767px;top:934px;width:12px;height:0px;border-top:1px dotted #aaa"></div>
<svg class="a" style="left:1779px;top:924px" width="16" height="16"><rect x=".5" y=".5" width="15" height="15" fill="none" stroke="#888" stroke-dasharray="2 1.200"/><rect x="2" y="2" width="12" height="12" fill="#5aa5e6"/></svg>
<div class="t" style="top:927.0px;line-height:16px;font-size:12px;left:1801px;color:#111;">A2施工设计说明</div>
<div class="a" style="left:1767px;top:954px;width:12px;height:0px;border-top:1px dotted #aaa"></div>
<svg class="a" style="left:1779px;top:944px" width="16" height="16"><rect x=".5" y=".5" width="15" height="15" fill="none" stroke="#888" stroke-dasharray="2 1.200"/><rect x="2" y="2" width="12" height="12" fill="#5aa5e6"/></svg>
<div class="t" style="top:947.0px;line-height:16px;font-size:12px;left:1801px;color:#111;">A2施工设计说明2</div>
<div class="a" style="left:1767px;top:974px;width:12px;height:0px;border-top:1px dotted #aaa"></div>
<svg class="a" style="left:1779px;top:964px" width="16" height="16"><rect x=".5" y=".5" width="15" height="15" fill="none" stroke="#888" stroke-dasharray="2 1.200"/><rect x="2" y="2" width="12" height="12" fill="#5aa5e6"/></svg>
<div class="t" style="top:967.0px;line-height:16px;font-size:12px;left:1801px;color:#111;">A2施工</div>
<div class="a" style="left:1717px;top:968px;width:127px;height:19px;background:#f1f0f3"></div>
<div class="a" style="left:1736px;top:969px;width:108px;height:16px;background:#cdcdcd"></div>
<svg class="a" style="left:1721px;top:971.500px" width="10" height="11"><path d="M7 1.500l-4 4l4 4" fill="none" stroke="#333" stroke-width="1.800"/></svg>
<!-- status -->
<div class="a" style="left:0px;top:987px;width:1844px;height:15px;background:#cccccc"></div>
<div class="a" style="left:963px;top:991px;width:204px;height:11px;background:#fbfbfb"></div>
<div class="a" style="left:1278px;top:991px;width:204px;height:11px;background:#fbfbfb"></div>
<div class="t" style="top:994.0px;line-height:16px;font-size:12px;left:1282px;color:#666;">主模型</div>
<svg class="a" style="left:1154px;top:992px" width="10" height="10"><path d="M2 4l3 3l3-3" fill="none" stroke="#999" stroke-width="1.200"/></svg>
<svg class="a" style="left:1470px;top:992px" width="10" height="10"><path d="M2 4l3 3l3-3" fill="none" stroke="#999" stroke-width="1.200"/></svg>
<svg class="a" style="left:939px;top:989px" width="18" height="14"><path d="M6 3l4-2l4 2v5l-4 2l-4-2z" fill="#8fc08a" stroke="#3d7a3a"/><circle cx="5" cy="10" r="3.500" fill="#2d7bd8"/><circle cx="13" cy="11" r="3" fill="#fff" stroke="#1d4f8f" stroke-width="1.200"/></svg>
<svg class="a" style="left:1176px;top:990px" width="18" height="12"><path d="M4 2h10v5H8l-4 4z" fill="#ddd" stroke="#999" stroke-width="1.200"/></svg>
<div class="t" style="top:993.0px;line-height:16px;font-size:12px;left:1198px;color:#222;">:0</div>
<div class="a" style="left:1211px;top:999px;width:10px;height:1px;background:#9b59b6"></div>
<svg class="a" style="left:1228px;top:990px" width="18" height="12"><rect x="1" y="1" width="15" height="12" fill="#f4f4f4" stroke="#333" stroke-width="1.300"/><path d="M1 4h15" stroke="#333" stroke-width="1.500"/><path d="M4 7.500h3M8.500 7.500h6M8.500 10.500h6" stroke="#333" stroke-width="1.200"/></svg>
<div class="a" style="left:1256px;top:991px;width:15px;height:11px;background:#999"></div>
<svg class="a" style="left:1256px;top:991px" width="15" height="11"><path d="M2 2l7 7l1-4z" fill="#ddd"/></svg>
<svg class="a" style="left:1662px;top:991px" width="16" height="11"><path d="M2 9l5-7l6 4l-3 5z" fill="#e0a800" opacity=".85"/><path d="M8 3l4 8" stroke="#222" stroke-width="1.200"/></svg>
<svg class="a" style="left:1688px;top:991px" width="16" height="11"><path d="M2 9l5-7l6 4l-3 5z" fill="#2d7bd8" opacity=".85"/><path d="M8 3l4 8" stroke="#222" stroke-width="1.200"/></svg>
<svg class="a" style="left:1714px;top:991px" width="16" height="11"><path d="M2 9l5-7l6 4l-3 5z" fill="#e07a20" opacity=".85"/><path d="M8 3l4 8" stroke="#222" stroke-width="1.200"/></svg>
<svg class="a" style="left:1740px;top:991px" width="16" height="11"><path d="M2 9l5-7l6 4l-3 5z" fill="#2d7bd8" opacity=".85"/><path d="M8 3l4 8" stroke="#222" stroke-width="1.200"/></svg>
<svg class="a" style="left:1766px;top:991px" width="16" height="11"><path d="M2 9l5-7l6 4l-3 5z" fill="#333" opacity=".85"/><path d="M8 3l4 8" stroke="#222" stroke-width="1.200"/></svg>
<svg class="a" style="left:1792px;top:991px" width="16" height="11"><path d="M2 9l5-7l6 4l-3 5z" fill="#bbb" opacity=".85"/><path d="M8 3l4 8" stroke="#222" stroke-width="1.200"/></svg>
<svg class="a" style="left:1816px;top:991px" width="16" height="11"><path d="M2 9l5-7l6 4l-3 5z" fill="#777" opacity=".85"/><path d="M8 3l4 8" stroke="#222" stroke-width="1.200"/></svg>
<div class="t" style="top:993.0px;line-height:16px;font-size:12px;left:1833px;color:#222;">:0</div>
</body></html>
